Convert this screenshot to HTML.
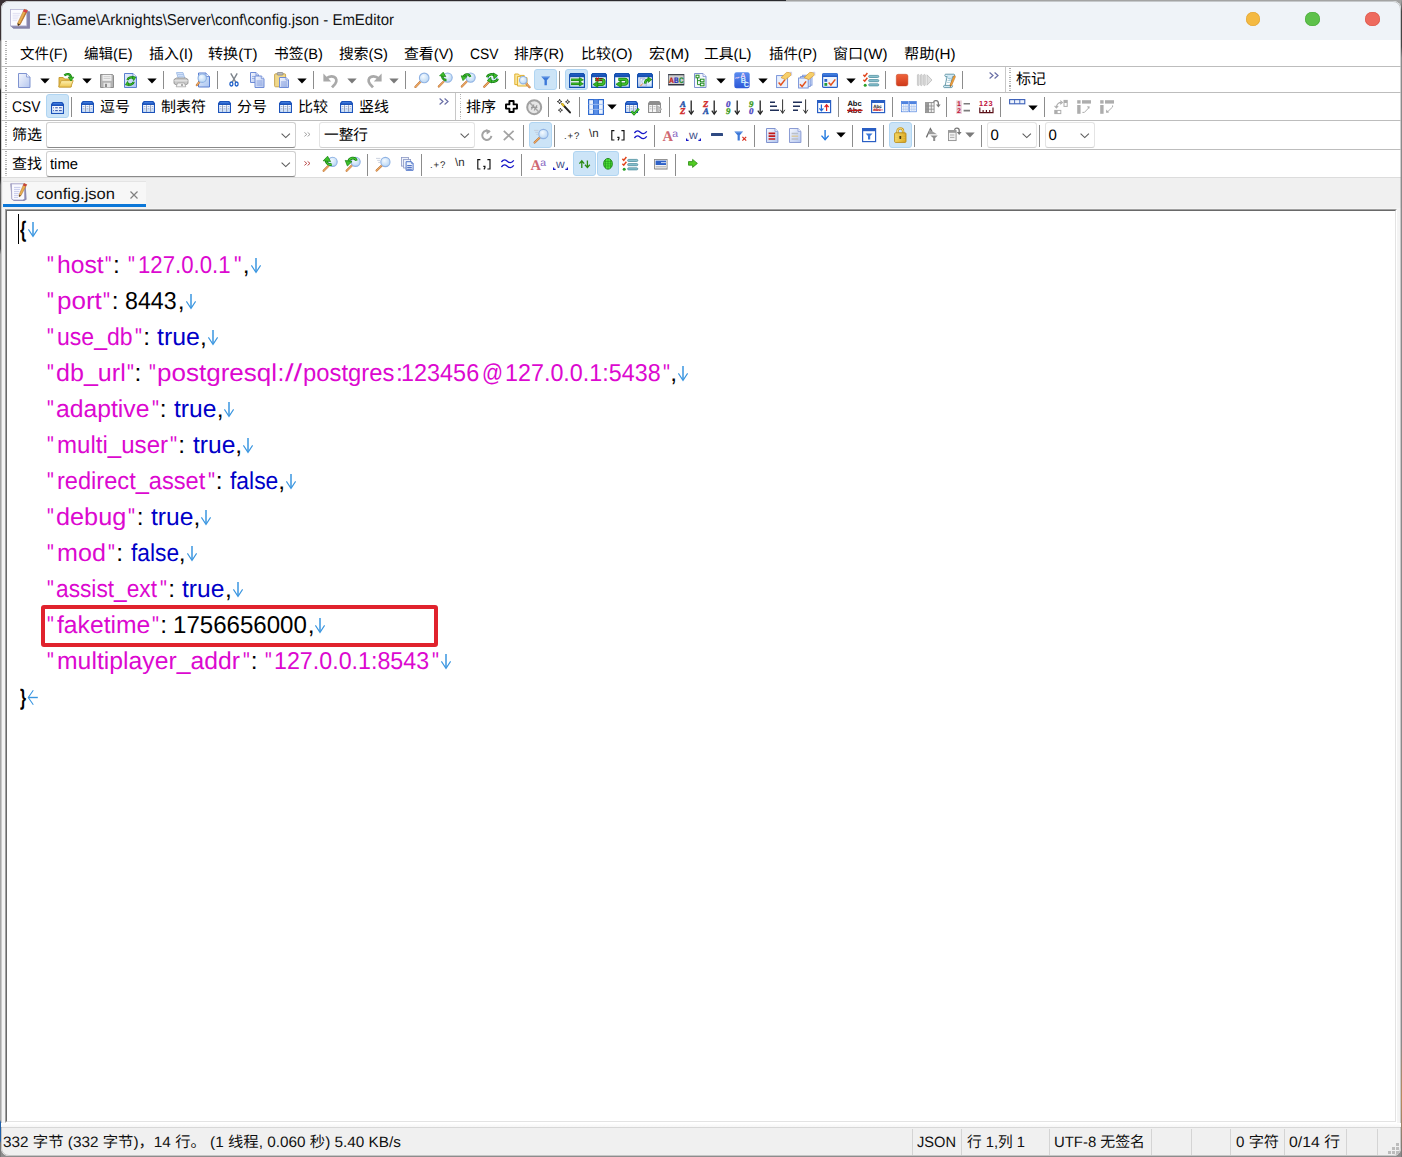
<!DOCTYPE html>
<html lang="zh-CN"><head><meta charset="utf-8"><title>E:\Game\Arknights\Server\conf\config.json - EmEditor</title>
<style>
html,body{margin:0;padding:0;}
body{width:1402px;height:1157px;overflow:hidden;position:relative;background:#8f8f8f;font-family:"Liberation Sans",sans-serif;font-size:15px;color:#000;text-rendering:geometricPrecision;}
.a{position:absolute;}
.t{position:absolute;white-space:nowrap;transform-origin:0 0;line-height:1;display:block;}
svg{position:absolute;overflow:visible;}
.win{position:absolute;left:1px;top:1px;width:1400px;height:1155px;border-radius:8px;background:#fff;overflow:hidden;}
.hl{position:absolute;left:0;width:1402px;height:1px;background:#bdbdbd;}
.vs{position:absolute;width:1px;height:19px;background:#8e8e8e;}
.hot{position:absolute;background:#cce4f7;border:1px solid #b0d5f2;border-radius:3px;box-sizing:border-box;}
.combo{position:absolute;background:#fff;border:1px solid #d0d0d0;border-bottom-color:#8a8a8a;border-radius:3px;box-sizing:border-box;}
.grip{position:absolute;width:1.4px;margin-left:.3px;background:repeating-linear-gradient(to bottom,#a9a9a9 0,#a9a9a9 1.15px,transparent 1.15px,transparent 2.17px,#cfcfcf 2.17px,#cfcfcf 3.3px,transparent 3.3px,transparent 4.34px);}
.c{display:inline-block;width:1em;text-align:center;font-style:normal;}
svg text{text-rendering:geometricPrecision;}

</style></head>
<body>
<div class="a" style="left:0;top:0;width:1402px;height:1157px;background:#8d8d8d"></div><div class="a" style="left:0;top:0;width:786px;height:12px;background:linear-gradient(to right,#3a3034 0,#2e2a2e 60%,#2a2a2e 100%)"></div><div class="a" style="left:786px;top:0;width:616px;height:12px;background:#a3a3a3"></div><div class="a" style="left:0;top:0;width:1px;height:1157px;background:linear-gradient(to bottom,#3a3034 0,#3a3034 3.4%,#8a8a8a 3.6%,#8a8a8a 7.6%,#2b2b2b 7.8%,#2b2b2b 15.5%,#6a6a6a 16%,#505050 21.5%,#a6a6a6 22%,#a6a6a6 96.8%,#1f5fa8 97%,#1f5fa8 98.6%,#777 98.8%,#777 100%)"></div><div class="a" style="left:1401px;top:0;width:1px;height:1157px;background:linear-gradient(to bottom,#9a9a9a 0,#444 1%,#444 4%,#8a8a8a 5%,#8a8a8a 90%,#b98a5a 95%,#777 100%)"></div><div class="win"><div class="a" style="left:0;top:0;width:1400px;height:39px;background:#eff3f8"></div><div class="a" style="left:0;top:177px;width:1400px;height:33px;background:#f0f0f0"></div><div class="a" style="left:0;top:176px;width:1400px;height:1px;background:#dcdcdc"></div><div class="a" style="left:0;top:207px;width:1400px;height:920px;background:#f4f4f4"></div><div class="a" style="left:0;top:1126px;width:1400px;height:30px;background:#f0f0f0"></div><div class="a" style="left:0;top:1126px;width:1400px;height:1px;background:#d7d7d7"></div></div><div class="a" style="left:1px;top:1px;width:1400px;height:1155px;border-radius:8px;box-sizing:border-box;border:1px solid rgba(120,120,120,.35);"></div><div class="hl" style="top:66px;left:1px;width:1400px"></div><div class="hl" style="top:92px;left:1px;width:1400px"></div><div class="hl" style="top:120px;left:1px;width:1400px"></div><div class="hl" style="top:149px;left:1px;width:1400px"></div><div class="grip" style="left:5px;top:41px;height:24px"></div><div class="grip" style="left:5px;top:68px;height:23px"></div><div class="grip" style="left:5px;top:94px;height:25px"></div><div class="grip" style="left:5px;top:122px;height:26px"></div><div class="grip" style="left:5px;top:151px;height:25px"></div><div class="grip" style="left:459.4px;top:94px;height:25px"></div><div class="grip" style="left:1009.2px;top:68px;height:23px"></div><div class="a" style="left:455px;top:93px;width:1px;height:27px;background:#c8c8c8"></div><div class="a" style="left:1005px;top:67px;width:1px;height:25px;background:#c8c8c8"></div><span class="t" style="left:36.6px;top:13.2px;font-size:15.7px;color:#111;transform:scaleX(0.9544);">E:\Game\Arknights\Server\conf\config.json - EmEditor</span><div class="a" style="left:1245.9px;top:11.9px;width:14.6px;height:14.6px;border-radius:50%;background:#f4b942;box-shadow:inset 0 0 0 0.6px #e0a535"></div><div class="a" style="left:1305.1px;top:11.9px;width:14.6px;height:14.6px;border-radius:50%;background:#5ec14b;box-shadow:inset 0 0 0 0.6px #4aa93a"></div><div class="a" style="left:1365.2px;top:11.9px;width:14.6px;height:14.6px;border-radius:50%;background:#ee6a5e;box-shadow:inset 0 0 0 0.6px #d9574b"></div><span class="t" style="left:20px;top:46.9px;font-size:15px;color:#000;transform:scaleX(0.9663);"><i class="c">文</i><i class="c">件</i>(F)</span><span class="t" style="left:84px;top:46.9px;font-size:15px;color:#000;transform:scaleX(0.9700);"><i class="c">编</i><i class="c">辑</i>(E)</span><span class="t" style="left:148.5px;top:46.9px;font-size:15px;color:#000;transform:scaleX(0.9961);"><i class="c">插</i><i class="c">入</i>(I)</span><span class="t" style="left:208px;top:46.9px;font-size:15px;color:#000;transform:scaleX(1.0070);"><i class="c">转</i><i class="c">换</i>(T)</span><span class="t" style="left:273.5px;top:46.9px;font-size:15px;color:#000;transform:scaleX(0.9800);"><i class="c">书</i><i class="c">签</i>(B)</span><span class="t" style="left:338.5px;top:46.9px;font-size:15px;color:#000;transform:scaleX(0.9800);"><i class="c">搜</i><i class="c">索</i>(S)</span><span class="t" style="left:403.5px;top:46.9px;font-size:15px;color:#000;transform:scaleX(0.9900);"><i class="c">查</i><i class="c">看</i>(V)</span><span class="t" style="left:470px;top:46.9px;font-size:15px;color:#000;transform:scaleX(0.9240);">CSV</span><span class="t" style="left:514px;top:46.9px;font-size:15px;color:#000;transform:scaleX(0.9837);"><i class="c">排</i><i class="c">序</i>(R)</span><span class="t" style="left:581px;top:46.9px;font-size:15px;color:#000;transform:scaleX(0.9967);"><i class="c">比</i><i class="c">较</i>(O)</span><span class="t" style="left:648.5px;top:46.9px;font-size:15px;color:#000;transform:scaleX(1.0800);"><i class="c">宏</i>(M)</span><span class="t" style="left:704px;top:46.9px;font-size:15px;color:#000;transform:scaleX(0.9825);"><i class="c">工</i><i class="c">具</i>(L)</span><span class="t" style="left:768.5px;top:46.9px;font-size:15px;color:#000;transform:scaleX(0.9600);"><i class="c">插</i><i class="c">件</i>(P)</span><span class="t" style="left:833px;top:46.9px;font-size:15px;color:#000;transform:scaleX(1.0063);"><i class="c">窗</i><i class="c">口</i>(W)</span><span class="t" style="left:904px;top:46.9px;font-size:15px;color:#000;transform:scaleX(1.0132);"><i class="c">帮</i><i class="c">助</i>(H)</span><span class="t" style="left:1016px;top:72.4px;font-size:15px;color:#000;"><i class="c">标</i><i class="c">记</i></span><span class="t" style="left:12.4px;top:99.5px;font-size:15.5px;color:#000;transform:scaleX(0.8910);">CSV</span><span class="t" style="left:100px;top:99.9px;font-size:15px;color:#000;"><i class="c">逗</i><i class="c">号</i></span><span class="t" style="left:161px;top:99.9px;font-size:15px;color:#000;"><i class="c">制</i><i class="c">表</i><i class="c">符</i></span><span class="t" style="left:237px;top:99.9px;font-size:15px;color:#000;"><i class="c">分</i><i class="c">号</i></span><span class="t" style="left:298px;top:99.9px;font-size:15px;color:#000;"><i class="c">比</i><i class="c">较</i></span><span class="t" style="left:359px;top:99.9px;font-size:15px;color:#000;"><i class="c">竖</i><i class="c">线</i></span><span class="t" style="left:466px;top:99.9px;font-size:15px;color:#000;"><i class="c">排</i><i class="c">序</i></span><span class="t" style="left:12px;top:127.9px;font-size:15px;color:#000;"><i class="c">筛</i><i class="c">选</i></span><span class="t" style="left:12px;top:156.9px;font-size:15px;color:#000;"><i class="c">查</i><i class="c">找</i></span><div class="combo" style="left:46px;top:122px;width:250px;height:26px"></div><div class="combo" style="left:46px;top:151px;width:250px;height:26px"></div><div class="combo" style="left:319px;top:122px;width:156px;height:26px;border-color:#e4e4e4;border-bottom-color:#d0d0d0"></div><div class="combo" style="left:987px;top:122px;width:50px;height:26px;border-color:#e4e4e4;border-bottom-color:#d0d0d0"></div><div class="combo" style="left:1045px;top:122px;width:50px;height:26px;border-color:#e4e4e4;border-bottom-color:#d0d0d0"></div><span class="t" style="left:324px;top:127.9px;font-size:15px;color:#000;transform:scaleX(0.9778);"><i class="c">一</i><i class="c">整</i><i class="c">行</i></span><span class="t" style="left:50px;top:156.9px;font-size:15px;color:#000;transform:scaleX(0.9879);">time</span><span class="t" style="left:990.5px;top:127.9px;font-size:15px;color:#000;">0</span><span class="t" style="left:1048.5px;top:127.9px;font-size:15px;color:#000;">0</span><div class="a" style="left:3px;top:181px;width:143px;height:26px;background:#f7f7f7;border-top:1px solid #e4e4e4;box-sizing:border-box"></div><div class="a" style="left:3px;top:204px;width:143px;height:3px;background:#0b77d8"></div><span class="t" style="left:35.8px;top:186.9px;font-size:15.5px;color:#111;transform:scaleX(1.0660);">config.json</span><div class="a" style="left:5px;top:209px;width:1392px;height:914px;background:#fff;box-sizing:border-box;border-top:1px solid #a0a0a0;border-left:1px solid #a0a0a0;border-right:1px solid #fff;border-bottom:1px solid #fff"></div><div class="a" style="left:6px;top:210px;width:1390px;height:912px;background:#fff;box-sizing:border-box;border-top:1px solid #696969;border-left:1px solid #696969;border-right:1px solid #e3e3e3;border-bottom:1px solid #e3e3e3"></div><div class="a" style="left:1px;top:1123px;width:1400px;height:4px;background:linear-gradient(to bottom,#fff,#f6f6f6)"></div><span class="t" style="left:3.1px;top:1135.4px;font-size:15px;color:#111;transform:scaleX(1.0222);">332 <i class="c">字</i><i class="c">节</i> (332 <i class="c">字</i><i class="c">节</i>)<i class="c">，</i>14 <i class="c">行</i><i class="c">。</i> (1 <i class="c">线</i><i class="c">程</i>, 0.060 <i class="c">秒</i>) 5.40 KB/s</span><div class="a" style="left:912px;top:1129px;width:1px;height:26px;background:#d4d4d4"></div><div class="a" style="left:961px;top:1129px;width:1px;height:26px;background:#d4d4d4"></div><div class="a" style="left:1049px;top:1129px;width:1px;height:26px;background:#d4d4d4"></div><div class="a" style="left:1151px;top:1129px;width:1px;height:26px;background:#d4d4d4"></div><div class="a" style="left:1191px;top:1129px;width:1px;height:26px;background:#d4d4d4"></div><div class="a" style="left:1230px;top:1129px;width:1px;height:26px;background:#d4d4d4"></div><div class="a" style="left:1284px;top:1129px;width:1px;height:26px;background:#d4d4d4"></div><div class="a" style="left:1346px;top:1129px;width:1px;height:26px;background:#d4d4d4"></div><div class="a" style="left:1377px;top:1129px;width:1px;height:26px;background:#d4d4d4"></div><span class="t" style="left:917px;top:1135.4px;font-size:15px;color:#111;transform:scaleX(0.9746);">JSON</span><span class="t" style="left:966.5px;top:1135.4px;font-size:15px;color:#111;transform:scaleX(0.9797);"><i class="c">行</i> 1,<i class="c">列</i> 1</span><span class="t" style="left:1054px;top:1135.4px;font-size:15px;color:#111;transform:scaleX(0.9927);">UTF-8 <i class="c">无</i><i class="c">签</i><i class="c">名</i></span><span class="t" style="left:1236px;top:1135.4px;font-size:15px;color:#111;transform:scaleX(1.0114);">0 <i class="c">字</i><i class="c">符</i></span><span class="t" style="left:1289px;top:1135.4px;font-size:15px;color:#111;transform:scaleX(1.0543);">0/14 <i class="c">行</i></span><div class="a" style="left:1388px;top:1151px;width:3px;height:3px;background:#bcbcbc"></div><div class="a" style="left:1392px;top:1151px;width:3px;height:3px;background:#bcbcbc"></div><div class="a" style="left:1396px;top:1151px;width:3px;height:3px;background:#bcbcbc"></div><div class="a" style="left:1392px;top:1147px;width:3px;height:3px;background:#bcbcbc"></div><div class="a" style="left:1396px;top:1147px;width:3px;height:3px;background:#bcbcbc"></div><div class="a" style="left:1396px;top:1143px;width:3px;height:3px;background:#bcbcbc"></div><svg width="0" height="0" style="left:0;top:0"><defs><linearGradient id="gPg" x1="0" y1="0" x2="1" y2="1"><stop offset="0" stop-color="#f6f8fe"/><stop offset="1" stop-color="#b4c6ee"/></linearGradient><linearGradient id="gPb" x1="0" y1="0" x2="1" y2="1"><stop offset="0" stop-color="#e8f0fd"/><stop offset="1" stop-color="#a9c4f0"/></linearGradient><linearGradient id="gFo" x1="0" y1="0" x2="0" y2="1"><stop offset="0" stop-color="#fdf0b0"/><stop offset="1" stop-color="#eec650"/></linearGradient><radialGradient id="gGl" cx=".4" cy=".35" r=".7"><stop offset="0" stop-color="#f4faff"/><stop offset="1" stop-color="#b5d4f3"/></radialGradient><linearGradient id="gHd" x1="0" y1="0" x2="1" y2="1"><stop offset="0" stop-color="#f0b070"/><stop offset="1" stop-color="#b86a2c"/></linearGradient><linearGradient id="gRec" x1="0" y1="0" x2="0" y2="1"><stop offset="0" stop-color="#f0633a"/><stop offset="1" stop-color="#cf3a1c"/></linearGradient><linearGradient id="gBl" x1="0" y1="0" x2="0" y2="1"><stop offset="0" stop-color="#5b8cf0"/><stop offset="1" stop-color="#2c58d8"/></linearGradient><linearGradient id="gLk" x1="0" y1="0" x2="1" y2="0"><stop offset="0" stop-color="#f7dc6a"/><stop offset="1" stop-color="#d9a520"/></linearGradient><linearGradient id="gTd" x1="0" y1="0" x2="0" y2="1"><stop offset="0" stop-color="#2f6ad2"/><stop offset="1" stop-color="#0f47a8"/></linearGradient><linearGradient id="gWb" x1="0" y1="0" x2="0" y2="1"><stop offset="0" stop-color="#ffffff"/><stop offset=".6" stop-color="#f4f9ff"/><stop offset="1" stop-color="#b5d5f8"/></linearGradient><linearGradient id="gTbody" x1="0" y1="0" x2="0" y2="1"><stop offset="0" stop-color="#ffffff"/><stop offset=".55" stop-color="#f2f7fe"/><stop offset="1" stop-color="#bcd6f8"/></linearGradient><linearGradient id="gTb" x1="0" y1="0" x2="0" y2="1"><stop offset="0" stop-color="#4d8be8"/><stop offset="1" stop-color="#1f55c0"/></linearGradient></defs></svg><svg style="left:18px;top:73px" width="16" height="16" viewBox="0 0 16 16"><path d="M0.5 0.5H8.5L12 4V14.5H0.5Z" fill="url(#gPg)" stroke="#7f93d0" stroke-width="1"/><path d="M8.5 0.5V4H12" fill="#f6f8fe" stroke="#7f93d0" stroke-width="0.8"/></svg><svg style="left:39.6px;top:77.6px" width="10" height="6" viewBox="0 0 10 6"><path d="M0.3 0.5H9.7L5 5.6Z" fill="#000"/></svg><svg style="left:57.5px;top:72px" width="16" height="16" viewBox="0 0 16 16"><path d="M1 5.5H5.2L6.6 7H13.2V15H1Z" fill="#e7c04e" stroke="#c2952a" stroke-width=".9"/><path d="M0.7 15L3.2 8.6H15.2L12.8 15Z" fill="url(#gFo)" stroke="#c9a038" stroke-width=".9"/><path d="M6.5 3.6C8.5 1.2 12.6 1.6 13 5.6" fill="none" stroke="#14800f" stroke-width="2.3"/><path d="M6.5 3.6C8.5 1.2 12.6 1.6 13 5.6" fill="none" stroke="#4ccc38" stroke-width="0.8"/><path d="M10.2 5.2H15.8L13 9Z" fill="#3dbf2a" stroke="#14800f" stroke-width=".7" stroke-linejoin="round"/></svg><svg style="left:81.6px;top:77.6px" width="10" height="6" viewBox="0 0 10 6"><path d="M0.3 0.5H9.7L5 5.6Z" fill="#000"/></svg><svg style="left:100px;top:74px" width="14" height="14" viewBox="0 0 14 14"><path d="M0.5 0.5H12.5L13.5 1.5V13.5H0.5Z" fill="#b4b4b4" stroke="#8d8d8d"/><rect x="2.5" y="0.8" width="9" height="6" fill="#f1f1f1"/><path d="M3.5 2.7H10.5M3.5 4.6H10.5" stroke="#c4c4c4" stroke-width=".8"/><rect x="3.5" y="8.8" width="7" height="4.7" fill="#e6e6e6"/><rect x="5" y="9.8" width="2" height="3.2" fill="#8c8c8c"/></svg><svg style="left:124px;top:73px" width="16" height="16" viewBox="0 0 16 16"><path d="M0.5 0.5H9L12.5 4V14.5H0.5Z" fill="url(#gPb)" stroke="#5a7fd0" stroke-width="1"/><path d="M9 0.5V4H12.5" fill="#f6f8fe" stroke="#5a7fd0" stroke-width="0.8"/><path d="M3.6 7.2C4 4.6 7.5 3.6 9.6 5.4" fill="none" stroke="#14800f" stroke-width="2.3"/><path d="M3.6 7.2C4 4.6 7.5 3.6 9.6 5.4" fill="none" stroke="#4ccc38" stroke-width="0.8"/><path d="M8 3.2L11.8 4.2L9.6 7.6Z" fill="#3dbf2a" stroke="#14800f" stroke-width=".7" stroke-linejoin="round"/><path d="M9.6 8.8C9.2 11.4 5.7 12.4 3.6 10.6" fill="none" stroke="#14800f" stroke-width="2.3"/><path d="M9.6 8.8C9.2 11.4 5.7 12.4 3.6 10.6" fill="none" stroke="#4ccc38" stroke-width="0.8"/><path d="M5.2 12.8L1.4 11.8L3.6 8.4Z" fill="#3dbf2a" stroke="#14800f" stroke-width=".7" stroke-linejoin="round"/></svg><svg style="left:146.8px;top:77.6px" width="10" height="6" viewBox="0 0 10 6"><path d="M0.3 0.5H9.7L5 5.6Z" fill="#000"/></svg><div class="a" style="left:163px;top:71px;width:1px;height:18px;background:#8c8c8c"></div><svg style="left:172.5px;top:72px" width="16" height="16" viewBox="0 0 16 16"><path d="M3.5 0.6H10L12 7H5.5Z" fill="#d6e6fb" stroke="#8fb0e0" stroke-width=".8"/><path d="M5 2.5H10M5.6 4.3H10.6" stroke="#9db9e6" stroke-width=".7"/><path d="M1 7.5L3.5 6H12.5L15 7.5V11.5L12.5 13H3.5L1 11.5Z" fill="#c9c9c9" stroke="#8a8a8a" stroke-width=".8"/><path d="M1.2 8.8H14.8" stroke="#f3f3f3" stroke-width=".8"/><path d="M4.5 11H11.5L12.8 14.8H3.2Z" fill="#f4f4f4" stroke="#9a9a9a" stroke-width=".7"/><circle cx="9" cy="13" r=".8" fill="#555"/></svg><svg style="left:196px;top:72px" width="16" height="16" viewBox="0 0 16 16"><path d="M2.5 1H10L13.5 4.5V15H2.5Z" fill="url(#gPb)" stroke="#5a7fd0" stroke-width="1"/><path d="M10 1V4.5H13.5" fill="#f6f8fe" stroke="#5a7fd0" stroke-width="0.8"/><path d="M3.63463 9.52549L0.8 13.2" stroke="#b5682a" stroke-width="2.1" stroke-linecap="round"/><path d="M3.63463 9.52549L0.8 13.2" stroke="#f3b06a" stroke-width="1.1" stroke-linecap="round"/><circle cx="6.2" cy="6.2" r="4.2" fill="url(#gGl)" stroke="#8fb2e3" stroke-width="1.1"/></svg><div class="a" style="left:217px;top:71px;width:1px;height:18px;background:#8c8c8c"></div><svg style="left:229.4px;top:73px" width="10" height="14" viewBox="0 0 10 14"><path d="M1.8 0.4L6.9 9.4M8.2 0.4L3.1 9.4" stroke="#7d848c" stroke-width="1.4" fill="none"/><ellipse cx="2.4" cy="11" rx="1.5" ry="2" fill="none" stroke="#1e5fc8" stroke-width="1.3"/><ellipse cx="7.6" cy="11" rx="1.5" ry="2" fill="none" stroke="#1e5fc8" stroke-width="1.3"/></svg><svg style="left:250px;top:72px" width="16" height="16" viewBox="0 0 16 16"><path d="M0.5 0.5H6L8.5 3V10.5H0.5Z" fill="url(#gPg)" stroke="#6f8cd6" stroke-width="1"/><path d="M6 0.5V3H8.5" fill="#f6f8fe" stroke="#6f8cd6" stroke-width="0.8"/><path d="M2 4.5H5M2 6.5H6" stroke="#8aa5e0" stroke-width=".8"/><path d="M5 4H11.3L14 6.7V15.5H5Z" fill="url(#gPg)" stroke="#6f8cd6" stroke-width="1"/><path d="M11.3 4V6.7H14" fill="#f6f8fe" stroke="#6f8cd6" stroke-width="0.8"/><path d="M6.5 9H12.5M6.5 11H12.5M6.5 13H12.5" stroke="#7f9ade" stroke-width=".9"/></svg><svg style="left:273.5px;top:72px" width="16" height="16" viewBox="0 0 16 16"><rect x="0.6" y="1.8" width="11" height="13" rx="1" fill="#f0d88a" stroke="#c4a04a" stroke-width=".9"/><rect x="3.2" y="0.5" width="5.8" height="2.6" rx=".8" fill="#b9b9b9" stroke="#808080" stroke-width=".7"/><path d="M5.5 5.5H12L14.5 8V15.5H5.5Z" fill="url(#gPg)" stroke="#6f8cd6" stroke-width="1"/><path d="M12 5.5V8H14.5" fill="#f6f8fe" stroke="#6f8cd6" stroke-width="0.8"/><path d="M7 10H13M7 12H13M7 14H13" stroke="#7f9ade" stroke-width=".9"/></svg><svg style="left:296.8px;top:77.6px" width="10" height="6" viewBox="0 0 10 6"><path d="M0.3 0.5H9.7L5 5.6Z" fill="#000"/></svg><div class="a" style="left:313px;top:71px;width:1px;height:18px;background:#8c8c8c"></div><svg style="left:322.5px;top:72.5px" width="16" height="16" viewBox="0 0 16 16"><path d="M3 5.8C8.6 0.6 16.4 4.6 12.2 10.8L9 14.4" fill="none" stroke="#a9a9a9" stroke-width="2.7" stroke-linejoin="round"/><path d="M0.4 0.4V8.6H8.2Z" fill="#a9a9a9"/></svg><svg style="left:346.6px;top:77.6px" width="10" height="6" viewBox="0 0 10 6"><path d="M0.3 0.5H9.7L5 5.6Z" fill="#7a7a7a"/></svg><svg style="left:365.5px;top:72.5px" width="16" height="16" viewBox="0 0 16 16"><g transform="translate(16 0) scale(-1 1)"><path d="M3 5.8C8.6 0.6 16.4 4.6 12.2 10.8L9 14.4" fill="none" stroke="#a9a9a9" stroke-width="2.7" stroke-linejoin="round"/><path d="M0.4 0.4V8.6H8.2Z" fill="#a9a9a9"/></g></svg><svg style="left:388.6px;top:77.6px" width="10" height="6" viewBox="0 0 10 6"><path d="M0.3 0.5H9.7L5 5.6Z" fill="#7a7a7a"/></svg><div class="a" style="left:405px;top:71px;width:1px;height:18px;background:#8c8c8c"></div><svg style="left:413.5px;top:72px" width="16" height="16" viewBox="0 0 16 16"><path d="M6.86324 9.35051L1.4 15" stroke="#b5682a" stroke-width="2.1" stroke-linecap="round"/><path d="M6.86324 9.35051L1.4 15" stroke="#f3b06a" stroke-width="1.1" stroke-linecap="round"/><circle cx="10.2" cy="5.9" r="4.8" fill="url(#gGl)" stroke="#8fb2e3" stroke-width="1.1"/></svg><svg style="left:436.5px;top:72px" width="16" height="16" viewBox="0 0 16 16"><path d="M7.38406 8.88903L1.8 14.6" stroke="#b5682a" stroke-width="2.1" stroke-linecap="round"/><path d="M7.38406 8.88903L1.8 14.6" stroke="#f3b06a" stroke-width="1.1" stroke-linecap="round"/><circle cx="10.6" cy="5.6" r="4.6" fill="url(#gGl)" stroke="#8fb2e3" stroke-width="1.1"/><path d="M9.4 8C6 8.2 4.6 5.4 5.6 3" fill="none" stroke="#14800f" stroke-width="2.3"/><path d="M9.4 8C6 8.2 4.6 5.4 5.6 3" fill="none" stroke="#4ccc38" stroke-width="0.8"/><path d="M2.6 3.8L6.2 0.2L8.8 4.6Z" fill="#3dbf2a" stroke="#14800f" stroke-width=".7" stroke-linejoin="round"/></svg><svg style="left:460px;top:72px" width="16" height="16" viewBox="0 0 16 16"><path d="M7.38406 8.88903L1.8 14.6" stroke="#b5682a" stroke-width="2.1" stroke-linecap="round"/><path d="M7.38406 8.88903L1.8 14.6" stroke="#f3b06a" stroke-width="1.1" stroke-linecap="round"/><circle cx="10.6" cy="5.6" r="4.6" fill="url(#gGl)" stroke="#8fb2e3" stroke-width="1.1"/><path d="M3.6 5.2C4.6 1.6 9.4 1.4 10.2 5" fill="none" stroke="#14800f" stroke-width="2.3"/><path d="M3.6 5.2C4.6 1.6 9.4 1.4 10.2 5" fill="none" stroke="#4ccc38" stroke-width="0.8"/><path d="M1.2 3.8L7 4.6L3 8.6Z" fill="#3dbf2a" stroke="#14800f" stroke-width=".7" stroke-linejoin="round"/></svg><svg style="left:483px;top:72px" width="16" height="16" viewBox="0 0 16 16"><path d="M6.56191 9.18276L1.2 14.8" stroke="#b5682a" stroke-width="2.1" stroke-linecap="round"/><path d="M6.56191 9.18276L1.2 14.8" stroke="#f3b06a" stroke-width="1.1" stroke-linecap="round"/><circle cx="9.6" cy="6" r="4.4" fill="url(#gGl)" stroke="#8fb2e3" stroke-width="1.1"/><path d="M4.2 5.2C5 2 9.6 1.4 11.6 3.8" fill="none" stroke="#14800f" stroke-width="2.5"/><path d="M4.2 5.2C5 2 9.6 1.4 11.6 3.8" fill="none" stroke="#4ccc38" stroke-width="0.9"/><path d="M10.2 1L14.6 3.4L11 6.8Z" fill="#3dbf2a" stroke="#14800f" stroke-width=".7" stroke-linejoin="round"/><path d="M14.6 6.8C13.8 10 9.2 10.6 7.2 8.2" fill="none" stroke="#14800f" stroke-width="2.5"/><path d="M14.6 6.8C13.8 10 9.2 10.6 7.2 8.2" fill="none" stroke="#4ccc38" stroke-width="0.9"/><path d="M8.6 11L4.2 8.6L7.8 5.2Z" fill="#3dbf2a" stroke="#14800f" stroke-width=".7" stroke-linejoin="round"/></svg><div class="a" style="left:505px;top:71px;width:1px;height:18px;background:#8c8c8c"></div><svg style="left:513.5px;top:72px" width="16" height="16" viewBox="0 0 16 16"><path d="M0.8 2H4.4L5.6 3.4H10.2V12.6H0.8Z" fill="#fbeaa4" stroke="#e0b030" stroke-width="1"/><path d="M3.4 4.4H6.8L7.8 5.6H13V14H3.4Z" fill="#fdf1c0" stroke="#e0b030" stroke-width="1"/><path d="M11.6966 10.9307L15.6 15.2" stroke="#b5682a" stroke-width="2.1" stroke-linecap="round"/><path d="M11.6966 10.9307L15.6 15.2" stroke="#f3b06a" stroke-width="1.1" stroke-linecap="round"/><circle cx="9.2" cy="8.2" r="3.7" fill="url(#gGl)" stroke="#8fb2e3" stroke-width="1.1"/></svg><div class="hot" style="left:534px;top:69px;width:23px;height:21px"></div><svg style="left:541px;top:75.8px" width="9.4" height="9.4" viewBox="0 0 9.4 9.4"><path d="M0.2 0.4H9.2L5.9 4.2V9.2H3.5V4.2Z" fill="#3c78d8"/><path d="M1.4 1H8" stroke="#8fb8f2" stroke-width=".7"/></svg><div class="a" style="left:559px;top:71px;width:1px;height:18px;background:#8c8c8c"></div><div class="hot" style="left:565px;top:69px;width:23px;height:21px"></div><svg style="left:568.5px;top:72.5px" width="16" height="15" viewBox="0 0 16 15"><path d="M0.6 14.4V2.2L1.8 0.6H14.2L15.4 2.2V14.4Z" fill="url(#gWb)" stroke="#1450b0" stroke-width="1.2" stroke-linejoin="round"/><path d="M0.6 3.6V2.2L1.8 0.6H14.2L15.4 2.2V3.6Z" fill="url(#gTd)" stroke="#1450b0" stroke-width="1.2" stroke-linejoin="round"/><path d="M2 6.8H11" fill="none" stroke="#14800f" stroke-width="2.6" stroke-linejoin="round"/><path d="M2 6.8H11" fill="none" stroke="#43c02c" stroke-width="1.1" stroke-linejoin="round"/><path d="M2 10.8H11" fill="none" stroke="#14800f" stroke-width="2.6" stroke-linejoin="round"/><path d="M2 10.8H11" fill="none" stroke="#43c02c" stroke-width="1.1" stroke-linejoin="round"/><path d="M10.4 4.6L14.4 6.8L10.4 9Z" fill="#35b322" stroke="#14800f" stroke-width=".7" stroke-linejoin="round"/><path d="M10.4 8.6L14.4 10.8L10.4 13Z" fill="#35b322" stroke="#14800f" stroke-width=".7" stroke-linejoin="round"/></svg><svg style="left:591px;top:72.5px" width="16" height="15" viewBox="0 0 16 15"><path d="M0.6 14.4V2.2L1.8 0.6H14.2L15.4 2.2V14.4Z" fill="url(#gWb)" stroke="#1450b0" stroke-width="1.2" stroke-linejoin="round"/><path d="M0.6 3.6V2.2L1.8 0.6H14.2L15.4 2.2V3.6Z" fill="url(#gTd)" stroke="#1450b0" stroke-width="1.2" stroke-linejoin="round"/><path d="M4 6.6H10.6C13.8 6.6 13.8 11.4 10.6 11.4H6" fill="none" stroke="#14800f" stroke-width="3.2" stroke-linejoin="round"/><path d="M4 6.6H10.6C13.8 6.6 13.8 11.4 10.6 11.4H6" fill="none" stroke="#43c02c" stroke-width="1.7" stroke-linejoin="round"/><path d="M6.8 8.2L2 11.4L6.8 14.4Z" fill="#35b322" stroke="#14800f" stroke-width=".7" stroke-linejoin="round"/><path d="M5 4.6L7.8 8.2M7.8 4.6L5 8.2" stroke="#c01414" stroke-width="1.3"/><path d="M8.6 5.6H11.4M8.6 7.4H11.4" stroke="#7a1010" stroke-width="1"/></svg><svg style="left:614px;top:72.5px" width="16" height="15" viewBox="0 0 16 15"><path d="M0.6 14.4V2.2L1.8 0.6H14.2L15.4 2.2V14.4Z" fill="url(#gWb)" stroke="#1450b0" stroke-width="1.2" stroke-linejoin="round"/><path d="M0.6 3.6V2.2L1.8 0.6H14.2L15.4 2.2V3.6Z" fill="url(#gTd)" stroke="#1450b0" stroke-width="1.2" stroke-linejoin="round"/><path d="M4.4 6.4H10.6C13.8 6.4 13.8 11.2 10.6 11.2H6.4" fill="none" stroke="#14800f" stroke-width="3.2" stroke-linejoin="round"/><path d="M4.4 6.4H10.6C13.8 6.4 13.8 11.2 10.6 11.2H6.4" fill="none" stroke="#43c02c" stroke-width="1.7" stroke-linejoin="round"/><path d="M7.2 7.8L2 11.2L7.2 14.4Z" fill="#35b322" stroke="#14800f" stroke-width=".7" stroke-linejoin="round"/></svg><svg style="left:637px;top:72.5px" width="16" height="15" viewBox="0 0 16 15"><path d="M0.6 14.4V2.2L1.8 0.6H14.2L15.4 2.2V14.4Z" fill="url(#gWb)" stroke="#1450b0" stroke-width="1.2" stroke-linejoin="round"/><path d="M0.6 3.6V2.2L1.8 0.6H14.2L15.4 2.2V3.6Z" fill="url(#gTd)" stroke="#1450b0" stroke-width="1.2" stroke-linejoin="round"/><path d="M3 5.2H7.6L9.2 6.8V13H3Z" fill="#f4f6fc" stroke="#8a9ad0" stroke-width=".7"/><circle cx="7.4" cy="8.6" r="2.6" fill="#e6f0fc" stroke="#9ab0d8" stroke-width=".8"/><path d="M5.6 10.6L3.4 13.2" stroke="#d89a6a" stroke-width="1.1"/><path d="M8.2 10.4C8.2 7.4 10.2 6.4 12.2 6.6" fill="none" stroke="#14800f" stroke-width="2.6" stroke-linejoin="round"/><path d="M8.2 10.4C8.2 7.4 10.2 6.4 12.2 6.6" fill="none" stroke="#43c02c" stroke-width="1.1" stroke-linejoin="round"/><path d="M11 4L14.8 6.6L11.2 9.4Z" fill="#35b322" stroke="#14800f" stroke-width=".7" stroke-linejoin="round"/></svg><div class="a" style="left:659px;top:71px;width:1px;height:18px;background:#8c8c8c"></div><svg style="left:667.8px;top:74px" width="16.4" height="11.4" viewBox="0 0 16.4 11.4"><rect x="0.4" y="0.4" width="15.6" height="10.6" fill="#cfcfcf" stroke="#5a6070" stroke-width=".8"/><path d="M0.4 0.8H16M0.4 10.6H16" stroke="#30343c" stroke-width="1.1"/><text x="0.9" y="8.9" font-family="Liberation Sans,sans-serif" font-weight="bold" font-size="8" fill="#c01818" stroke="#c01818" stroke-width=".25" textLength="4.9" lengthAdjust="spacingAndGlyphs">A</text><text x="6" y="8.9" font-family="Liberation Sans,sans-serif" font-weight="bold" font-size="8" fill="#2030b8" stroke="#2030b8" stroke-width=".25" textLength="4.6" lengthAdjust="spacingAndGlyphs">B</text><text x="10.9" y="8.9" font-family="Liberation Sans,sans-serif" font-weight="bold" font-size="8" fill="#1a8a2a" stroke="#1a8a2a" stroke-width=".25" textLength="4.6" lengthAdjust="spacingAndGlyphs">C</text></svg><svg style="left:694px;top:72.5px" width="13" height="15" viewBox="0 0 13 15"><path d="M0.5 0.5H9L12 3.5V14.5H0.5Z" fill="#f4f7fd" stroke="#7f93d0" stroke-width="1"/><path d="M9 0.5V3.5H12" fill="#f6f8fe" stroke="#7f93d0" stroke-width="0.8"/><rect x="2" y="2.2" width="3" height="2.6" fill="#f4fbf4" stroke="#1f8a1f" stroke-width="1"/><path d="M3.5 4.8V11.6H6.4M3.5 7.6H6.4" fill="none" stroke="#1f8a1f" stroke-width=".9"/><rect x="6.4" y="6.2" width="3.6" height="2.6" fill="#f4fbf4" stroke="#1f8a1f" stroke-width="1"/><rect x="6.4" y="10.2" width="3.6" height="2.6" fill="#f4fbf4" stroke="#1f8a1f" stroke-width="1"/></svg><svg style="left:715.6px;top:77.6px" width="10" height="6" viewBox="0 0 10 6"><path d="M0.3 0.5H9.7L5 5.6Z" fill="#000"/></svg><svg style="left:733.5px;top:71.5px" width="16" height="17" viewBox="0 0 16 17"><rect x="0.3" y="0.3" width="15.4" height="16" rx="2.2" fill="url(#gBl)"/><text x="6.2" y="6.4" font-family="Liberation Sans,sans-serif" font-weight="bold" font-size="7.4" fill="#f4dcf4">A</text><text x="6.8" y="11.4" font-family="Liberation Sans,sans-serif" font-weight="bold" font-size="7.4" fill="#d4f2ff">B</text><text x="9.8" y="15.4" font-family="Liberation Sans,sans-serif" font-weight="bold" font-size="7.4" fill="#d4f2ff">C</text><path d="M1.4 6.6C2.4 4.6 3.4 7.2 5.4 4.8" fill="none" stroke="#e0c8f0" stroke-width="1.1"/></svg><svg style="left:757.6px;top:77.6px" width="10" height="6" viewBox="0 0 10 6"><path d="M0.3 0.5H9.7L5 5.6Z" fill="#000"/></svg><svg style="left:775.5px;top:71.5px" width="16" height="16.5" viewBox="0 0 16 16.5"><rect x="0.6" y="3.6" width="11" height="12" fill="#e9f0fc" stroke="#6f8cd6" stroke-width=".9"/><path d="M2.6 10.6L4.8 13L9 7.6" fill="none" stroke="#e4521e" stroke-width="1.5"/><path d="M5 5.6L10.6 0.4L14.8 0.6L15.2 3L9.6 7.6Z" fill="#f6cf6a" stroke="#d8962a" stroke-width=".7"/><path d="M13.4 0.4L15.6 0.2V3.6" fill="none" stroke="#c9c9e8" stroke-width=".9"/></svg><svg style="left:798px;top:71.5px" width="17" height="16.5" viewBox="0 0 17 16.5"><rect x="4.6" y="3.2" width="9.4" height="10" fill="#dbe6fa" stroke="#6f8cd6" stroke-width=".8"/><rect x="2.6" y="4.6" width="9.6" height="10" fill="#dbe6fa" stroke="#6f8cd6" stroke-width=".8"/><rect x="0.6" y="6" width="9.6" height="10" fill="#e9f0fc" stroke="#6f8cd6" stroke-width=".9"/><path d="M2 12.25L4.09 14.53L8.08 9.4" fill="none" stroke="#e4521e" stroke-width="1.5"/><g transform="translate(1.2 0)"><path d="M5 5.6L10.6 0.4L14.8 0.6L15.2 3L9.6 7.6Z" fill="#f6cf6a" stroke="#d8962a" stroke-width=".7"/><path d="M13.4 0.4L15.6 0.2V3.6" fill="none" stroke="#c9c9e8" stroke-width=".9"/></g></svg><svg style="left:822px;top:72.5px" width="16" height="15" viewBox="0 0 16 15"><rect x="0.6" y="0.6" width="14.8" height="13.8" rx="1" fill="#eef4fd" stroke="#2a62c8" stroke-width="1.2"/><path d="M0.6 1.6Q0.6 0.6 1.6 0.6H14.4Q15.4 0.6 15.4 1.6V4H0.6Z" fill="url(#gTb)"/><rect x="2.4" y="6" width="2.8" height="2.8" fill="#2a62c8"/><rect x="2.4" y="10" width="2.8" height="2.8" fill="#1f9a3a"/><path d="M6.6 9.55L8.91 12.07L13.32 6.4" fill="none" stroke="#e4521e" stroke-width="1.5"/></svg><svg style="left:845.6px;top:77.6px" width="10" height="6" viewBox="0 0 10 6"><path d="M0.3 0.5H9.7L5 5.6Z" fill="#000"/></svg><svg style="left:862.5px;top:72px" width="16" height="16" viewBox="0 0 16 16"><path d="M0.4 2.86L1.764 4.348L4.368 1" fill="none" stroke="#e0451c" stroke-width="1.5"/><path d="M0.4 7.66L1.764 9.148L4.368 5.8" fill="none" stroke="#e0451c" stroke-width="1.5"/><circle cx="2.2" cy="13.2" r="1.5" fill="#2aa02a"/><rect x="5.6" y="3.4" width="10.2" height="2.1" rx="1.05" fill="#8cc3cf" stroke="#3f8496" stroke-width=".7"/><rect x="5.6" y="7.6" width="10.2" height="2.1" rx="1.05" fill="#8cc3cf" stroke="#3f8496" stroke-width=".7"/><rect x="5.6" y="11.8" width="10.2" height="2.1" rx="1.05" fill="#8cc3cf" stroke="#3f8496" stroke-width=".7"/></svg><div class="a" style="left:885px;top:71px;width:1px;height:18px;background:#8c8c8c"></div><svg style="left:896px;top:74px" width="12.2" height="12.2" viewBox="0 0 12.2 12.2"><rect x="0.3" y="0.3" width="11.6" height="11.6" rx="1.8" fill="url(#gRec)" stroke="#c2401f" stroke-width=".5"/></svg><svg style="left:917px;top:74px" width="16" height="12" viewBox="0 0 16 12"><rect x="0.4" y="0.4" width="1.7" height="11.2" rx=".85" fill="#dadada" stroke="#b4b4b4" stroke-width=".6"/><rect x="3.5" y="0.4" width="1.7" height="11.2" rx=".85" fill="#dadada" stroke="#b4b4b4" stroke-width=".6"/><rect x="6.6" y="0.4" width="1.7" height="11.2" rx=".85" fill="#dadada" stroke="#b4b4b4" stroke-width=".6"/><path d="M10 0.8L15 6L10 11.2Z" fill="#e0e0e0" stroke="#b4b4b4" stroke-width=".7"/></svg><svg style="left:943px;top:72.5px" width="16.5" height="15.5" viewBox="0 0 16.5 15.5"><g transform="scale(.8 1)"><path d="M3.4 1.2H13.6C15 1.2 15 3.6 13.6 3.6H12L9.4 12.4H1.6C0.4 12.4 0.4 14.6 1.6 14.6H10.4C12.2 14.6 12 12.4 12 12.4" fill="#cfe9f6" stroke="#4f8a9a" stroke-width=".9"/><path d="M3.4 1.2C1.8 1.2 2 3.6 3.4 3.6H5.2L2.8 12.2" fill="#cfe9f6" stroke="#4f8a9a" stroke-width=".9"/><path d="M6.2 5.4H9.8M5.6 7.4H9.2M5 9.4H8.6" stroke="#7fb0c0" stroke-width=".7"/><path d="M13.8 2.6L15.6 3.6L10.8 12.6L9 13.6L9 11.6Z" fill="#f2a73a" stroke="#b8651a" stroke-width=".6"/><path d="M9 13.6L9.1 12.2L10.2 12.9Z" fill="#333"/></svg><div class="a" style="left:962px;top:71px;width:1px;height:18px;background:#8c8c8c"></div><svg style="left:989px;top:72.3px" width="10" height="7" viewBox="0 0 10 7"><path d="M0.6 0.5L4 3.5L0.6 6.5M5.6 0.5L9 3.5L5.6 6.5" fill="none" stroke="#6a6fa6" stroke-width="1.2"/></svg><div class="hot" style="left:45.5px;top:93.8px;width:23.5px;height:24.5px"></div><svg style="left:51px;top:102px" width="13" height="12" viewBox="0 0 13 12"><path d="M0.55 11.45V2.6L2.2 0.55H10.8L12.45 2.6V11.45Z" fill="url(#gTbody)" stroke="#1b52ba" stroke-width="1.1" stroke-linejoin="round"/><path d="M0.55 3.4V2.6L2.2 0.55H10.8L12.45 2.6V3.4Z" fill="url(#gTb)" stroke="#1b52ba" stroke-width="1.1" stroke-linejoin="round"/><path d="M2.2 5.8H3M4.2 5.8H6.8M8 5.8H10.8M2.2 8.6H3M4.2 8.6H6.8M8 8.6H10.8" stroke="#3050a8" stroke-width="1"/></svg><div class="a" style="left:71px;top:97.2px;width:1px;height:19.6px;background:#8c8c8c"></div><svg style="left:81px;top:101px" width="13" height="12" viewBox="0 0 13 12"><path d="M0.55 11.45V2.6L2.2 0.55H10.8L12.45 2.6V11.45Z" fill="url(#gTbody)" stroke="#1b52ba" stroke-width="1.1" stroke-linejoin="round"/><path d="M0.55 3.4V2.6L2.2 0.55H10.8L12.45 2.6V3.4Z" fill="url(#gTb)" stroke="#1b52ba" stroke-width="1.1" stroke-linejoin="round"/><path d="M4.5 4.2V10.8M8.6 4.2V10.8" stroke="#8a94ad" stroke-width=".9"/><path d="M1.8 5.6H3.4M5.6 5.6H7.4M9.8 5.6H11.2M1.8 7.8H3.4M5.6 7.8H7.4M9.8 7.8H11.2" stroke="#7f9ad8" stroke-width=".8"/></svg><svg style="left:142px;top:101px" width="13" height="12" viewBox="0 0 13 12"><path d="M0.55 11.45V2.6L2.2 0.55H10.8L12.45 2.6V11.45Z" fill="url(#gTbody)" stroke="#1b52ba" stroke-width="1.1" stroke-linejoin="round"/><path d="M0.55 3.4V2.6L2.2 0.55H10.8L12.45 2.6V3.4Z" fill="url(#gTb)" stroke="#1b52ba" stroke-width="1.1" stroke-linejoin="round"/><path d="M4.5 4.2V10.8M8.6 4.2V10.8" stroke="#8a94ad" stroke-width=".9"/><path d="M1.8 5.6H3.4M5.6 5.6H7.4M9.8 5.6H11.2M1.8 7.8H3.4M5.6 7.8H7.4M9.8 7.8H11.2" stroke="#7f9ad8" stroke-width=".8"/></svg><svg style="left:218px;top:101px" width="13" height="12" viewBox="0 0 13 12"><path d="M0.55 11.45V2.6L2.2 0.55H10.8L12.45 2.6V11.45Z" fill="url(#gTbody)" stroke="#1b52ba" stroke-width="1.1" stroke-linejoin="round"/><path d="M0.55 3.4V2.6L2.2 0.55H10.8L12.45 2.6V3.4Z" fill="url(#gTb)" stroke="#1b52ba" stroke-width="1.1" stroke-linejoin="round"/><path d="M4.5 4.2V10.8M8.6 4.2V10.8" stroke="#8a94ad" stroke-width=".9"/><path d="M1.8 5.6H3.4M5.6 5.6H7.4M9.8 5.6H11.2M1.8 7.8H3.4M5.6 7.8H7.4M9.8 7.8H11.2" stroke="#7f9ad8" stroke-width=".8"/></svg><svg style="left:279px;top:101px" width="13" height="12" viewBox="0 0 13 12"><path d="M0.55 11.45V2.6L2.2 0.55H10.8L12.45 2.6V11.45Z" fill="url(#gTbody)" stroke="#1b52ba" stroke-width="1.1" stroke-linejoin="round"/><path d="M0.55 3.4V2.6L2.2 0.55H10.8L12.45 2.6V3.4Z" fill="url(#gTb)" stroke="#1b52ba" stroke-width="1.1" stroke-linejoin="round"/><path d="M4.5 4.2V10.8M8.6 4.2V10.8" stroke="#8a94ad" stroke-width=".9"/><path d="M1.8 5.6H3.4M5.6 5.6H7.4M9.8 5.6H11.2M1.8 7.8H3.4M5.6 7.8H7.4M9.8 7.8H11.2" stroke="#7f9ad8" stroke-width=".8"/></svg><svg style="left:340px;top:101px" width="13" height="12" viewBox="0 0 13 12"><path d="M0.55 11.45V2.6L2.2 0.55H10.8L12.45 2.6V11.45Z" fill="url(#gTbody)" stroke="#1b52ba" stroke-width="1.1" stroke-linejoin="round"/><path d="M0.55 3.4V2.6L2.2 0.55H10.8L12.45 2.6V3.4Z" fill="url(#gTb)" stroke="#1b52ba" stroke-width="1.1" stroke-linejoin="round"/><path d="M4.5 4.2V10.8M8.6 4.2V10.8" stroke="#8a94ad" stroke-width=".9"/><path d="M1.8 5.6H3.4M5.6 5.6H7.4M9.8 5.6H11.2M1.8 7.8H3.4M5.6 7.8H7.4M9.8 7.8H11.2" stroke="#7f9ad8" stroke-width=".8"/></svg><svg style="left:439px;top:98px" width="10" height="7" viewBox="0 0 10 7"><path d="M0.6 0.5L4 3.5L0.6 6.5M5.6 0.5L9 3.5L5.6 6.5" fill="none" stroke="#6a6fa6" stroke-width="1.2"/></svg><svg style="left:504.5px;top:100px" width="13" height="13" viewBox="0 0 13 13"><path d="M4.4 1H8.6V4.4H12V8.6H8.6V12H4.4V8.6H1V4.4H4.4Z" fill="#fff" stroke="#000" stroke-width="1.9" stroke-linejoin="round"/></svg><svg style="left:525.5px;top:98.5px" width="16.4" height="16.4" viewBox="0 0 16.4 16.4"><circle cx="8.2" cy="8.2" r="7" fill="#e6e6e6" stroke="#a0a0a0" stroke-width="2"/><path d="M3.2 3.2L13.2 13.2" stroke="#a8a8a8" stroke-width="1.5"/><path d="M5.4 10.6L8 5.6M8.2 11.4L11 6.2M5 8.4H11.4" stroke="#9a9a9a" stroke-width="1.1" fill="none"/></svg><div class="a" style="left:548px;top:97.2px;width:1px;height:19.6px;background:#8c8c8c"></div><svg style="left:557px;top:99px" width="14.5" height="14.5" viewBox="0 0 14.5 14.5"><path d="M5.2 5L13 13.4" stroke="#222" stroke-width="2" stroke-linecap="round"/><path d="M5.2 5L6.6 6.6" stroke="#e8c020" stroke-width="2" stroke-linecap="round"/><path d="M0 -2.4L.6 -.6L2.4 0L.6 .6L0 2.4L-.6 .6L-2.4 0L-.6 -.6Z" transform="translate(2.6 2.6)" fill="#fff" stroke="#222" stroke-width=".8"/><path d="M0 -2.4L.6 -.6L2.4 0L.6 .6L0 2.4L-.6 .6L-2.4 0L-.6 -.6Z" transform="translate(10.6 2.8) scale(.9)" fill="#fff" stroke="#222" stroke-width=".8"/><path d="M0 -2.4L.6 -.6L2.4 0L.6 .6L0 2.4L-.6 .6L-2.4 0L-.6 -.6Z" transform="translate(3.4 11.2) scale(.9)" fill="#fff" stroke="#222" stroke-width=".8"/></svg><div class="a" style="left:579px;top:97.2px;width:1px;height:19.6px;background:#8c8c8c"></div><svg style="left:588px;top:99px" width="16" height="16" viewBox="0 0 16 16"><rect x="0.6" y="0.6" width="14.8" height="14.8" fill="#eaf2fd" stroke="#2f6ad0" stroke-width="1.2"/><rect x="5.6" y="0.6" width="4.8" height="14.8" fill="#5a8fe6"/><path d="M5.6 0.6V15.4M10.4 0.6V15.4" stroke="#2f6ad0" stroke-width="1"/><path d="M0.6 5.4H15.4M0.6 10.4H15.4" stroke="#9dbcf0" stroke-width=".9"/></svg><svg style="left:606.6px;top:104.4px" width="10" height="6" viewBox="0 0 10 6"><path d="M0.3 0.5H9.7L5 5.6Z" fill="#000"/></svg><svg style="left:625px;top:101px" width="14.5" height="14" viewBox="0 0 14.5 14"><path d="M0.55 11.45V2.6L2.2 0.55H10.8L12.45 2.6V11.45Z" fill="url(#gTbody)" stroke="#1b52ba" stroke-width="1.1" stroke-linejoin="round"/><path d="M0.55 3.4V2.6L2.2 0.55H10.8L12.45 2.6V3.4Z" fill="url(#gTb)" stroke="#1b52ba" stroke-width="1.1" stroke-linejoin="round"/><path d="M4.5 4.2V10.8M8.6 4.2V10.8" stroke="#8a94ad" stroke-width=".9"/><path d="M1.8 5.6H3.4M5.6 5.6H7.4M9.8 5.6H11.2M1.8 7.8H3.4M5.6 7.8H7.4M9.8 7.8H11.2" stroke="#7f9ad8" stroke-width=".8"/><path d="M6.4 10.2L9 13L13.8 7.8" fill="none" stroke="#14800f" stroke-width="2.4"/><path d="M6.4 10.2L9 13L13.8 7.8" fill="none" stroke="#4ccc38" stroke-width="1.1"/></svg><svg style="left:648px;top:101px" width="14.5" height="14" viewBox="0 0 14.5 14"><path d="M0.55 11.45V2.6L2.2 0.55H10.8L12.45 2.6V11.45Z" fill="#f6f6f6" stroke="#8e8e8e" stroke-width="1.1" stroke-linejoin="round"/><path d="M0.55 3.4V2.6L2.2 0.55H10.8L12.45 2.6V3.4Z" fill="#8e8e8e" stroke="#8e8e8e" stroke-width="1.1" stroke-linejoin="round"/><path d="M4.5 4.2V10.8M8.6 4.2V10.8" stroke="#a0a0a0" stroke-width=".9"/><path d="M1.8 5.6H3.4M5.6 5.6H7.4M1.8 7.8H3.4M5.6 7.8H7.4" stroke="#a8a8a8" stroke-width=".8"/><path d="M9.4 4.8L13.8 8.2L9.4 11.6Z" fill="#c4c4c4" stroke="#9a9a9a" stroke-width=".6"/></svg><div class="a" style="left:669px;top:97.2px;width:1px;height:19.6px;background:#8c8c8c"></div><svg style="left:679.5px;top:99.5px" width="15" height="15" viewBox="0 0 15 15"><text x="0" y="7" font-family="Liberation Serif,serif" font-weight="bold" font-style="italic" font-size="8.8" fill="#1f4fa8" stroke="#1f4fa8" stroke-width=".35">A</text><text x="0" y="14.4" font-family="Liberation Serif,serif" font-weight="bold" font-style="italic" font-size="8.8" fill="#d02a2a" stroke="#d02a2a" stroke-width=".35">Z</text><path d="M11.2 0.4V14" stroke="#222" stroke-width="1.3"/><path d="M8.8 10.6L11.2 14.2L13.6 10.6" fill="none" stroke="#222" stroke-width="1.2"/></svg><svg style="left:702.5px;top:99.5px" width="15" height="15" viewBox="0 0 15 15"><text x="0" y="7" font-family="Liberation Serif,serif" font-weight="bold" font-style="italic" font-size="8.8" fill="#d02a2a" stroke="#d02a2a" stroke-width=".35">Z</text><text x="0" y="14.4" font-family="Liberation Serif,serif" font-weight="bold" font-style="italic" font-size="8.8" fill="#1f4fa8" stroke="#1f4fa8" stroke-width=".35">A</text><path d="M11.2 0.4V14" stroke="#222" stroke-width="1.3"/><path d="M8.8 10.6L11.2 14.2L13.6 10.6" fill="none" stroke="#222" stroke-width="1.2"/></svg><svg style="left:726px;top:99.5px" width="15" height="15" viewBox="0 0 15 15"><text x="0" y="7" font-family="Liberation Serif,serif" font-weight="bold" font-style="italic" font-size="8.8" fill="#4a3fc0" stroke="#4a3fc0" stroke-width=".35">0</text><text x="0" y="14.4" font-family="Liberation Serif,serif" font-weight="bold" font-style="italic" font-size="8.8" fill="#3a9a1a" stroke="#3a9a1a" stroke-width=".35">9</text><path d="M11.2 0.4V14" stroke="#222" stroke-width="1.3"/><path d="M8.8 10.6L11.2 14.2L13.6 10.6" fill="none" stroke="#222" stroke-width="1.2"/></svg><svg style="left:749px;top:99.5px" width="15" height="15" viewBox="0 0 15 15"><text x="0" y="7" font-family="Liberation Serif,serif" font-weight="bold" font-style="italic" font-size="8.8" fill="#3a9a1a" stroke="#3a9a1a" stroke-width=".35">9</text><text x="0" y="14.4" font-family="Liberation Serif,serif" font-weight="bold" font-style="italic" font-size="8.8" fill="#4a3fc0" stroke="#4a3fc0" stroke-width=".35">0</text><path d="M11.2 0.4V14" stroke="#222" stroke-width="1.3"/><path d="M8.8 10.6L11.2 14.2L13.6 10.6" fill="none" stroke="#222" stroke-width="1.2"/></svg><svg style="left:770px;top:99px" width="15.5" height="15" viewBox="0 0 15.5 15"><path d="M0 3.2H5 M0 7.2H7 M0 11.2H9" stroke="#1f2f58" stroke-width="1.6"/><path d="M12.6 0.4V14.2" stroke="#333" stroke-width="1"/><path d="M10.4 10.8L12.6 14.4L14.8 10.8" fill="none" stroke="#333" stroke-width="1"/></svg><svg style="left:792.7px;top:99px" width="15.5" height="15" viewBox="0 0 15.5 15"><path d="M0 3.2H9 M0 7.2H7 M0 11.2H5" stroke="#1f2f58" stroke-width="1.6"/><path d="M12.6 0.4V14.2" stroke="#333" stroke-width="1"/><path d="M10.4 10.8L12.6 14.4L14.8 10.8" fill="none" stroke="#333" stroke-width="1"/></svg><svg style="left:816.7px;top:100px" width="14.2" height="13.2" viewBox="0 0 14.2 13.2"><rect x="0.6" y="0.6" width="13" height="12" fill="#fff" stroke="#2a5fc4" stroke-width="1.2"/><rect x="0.6" y="0.6" width="13" height="2.4" fill="#2a5fc4"/><path d="M4.4 4.6V10.6M2.4 8.4L4.4 10.8L6.4 8.4" fill="none" stroke="#1f6ad8" stroke-width="1.2"/><path d="M9.6 11V5M7.6 7.2L9.6 4.8L11.6 7.2" fill="none" stroke="#e02020" stroke-width="1.2"/></svg><div class="a" style="left:838px;top:97.2px;width:1px;height:19.6px;background:#8c8c8c"></div><svg style="left:847px;top:99px" width="16" height="15" viewBox="0 0 16 15"><text x="0.4" y="6.6" font-family="Liberation Sans,sans-serif" font-weight="bold" font-size="7.6" fill="#111">Abc</text><text x="0.4" y="14.2" font-family="Liberation Sans,sans-serif" font-weight="bold" font-size="7.6" fill="#5a1010">Abc</text><path d="M0 11.4H15.6" stroke="#c01818" stroke-width="1.3"/></svg><svg style="left:871px;top:100px" width="14.2" height="13.2" viewBox="0 0 14.2 13.2"><rect x="0.6" y="0.6" width="13" height="12" fill="#fff" stroke="#2a5fc4" stroke-width="1.2"/><rect x="0.6" y="0.6" width="13" height="2.4" fill="#2a5fc4"/><text x="2.2" y="7.6" font-family="Liberation Sans,sans-serif" font-weight="bold" font-size="4.6" fill="#222">Abc</text><text x="2.2" y="11.4" font-family="Liberation Sans,sans-serif" font-weight="bold" font-size="4.6" fill="#c01818">abc</text><path d="M2 9.9H12" stroke="#c01818" stroke-width=".6"/></svg><div class="a" style="left:892px;top:97.2px;width:1px;height:19.6px;background:#8c8c8c"></div><svg style="left:900.6px;top:101px" width="15.8" height="11.4" viewBox="0 0 15.8 11.4"><rect x="0.4" y="0.4" width="6.8" height="10.4" fill="#f2f6fd" stroke="#4f83e0" stroke-width=".7"/><rect x="0.4" y="0.4" width="6.8" height="2.6" fill="#4f83e0"/><path d="M2.7 3V10.8M4.9 3V10.8M0.4 5.6H7.2M0.4 8.2H7.2" stroke="#a9c3ee" stroke-width=".7"/><rect x="8.5" y="0.4" width="6.8" height="10.4" fill="#f2f6fd" stroke="#4f83e0" stroke-width=".7"/><rect x="8.5" y="0.4" width="6.8" height="2.6" fill="#4f83e0"/><path d="M10.8 3V10.8M13 3V10.8M8.5 5.6H15.3M8.5 8.2H15.3" stroke="#a9c3ee" stroke-width=".7"/></svg><svg style="left:924.6px;top:99.5px" width="16" height="13.4" viewBox="0 0 16 13.4"><rect x="0.5" y="2.6" width="8.6" height="10" fill="#f0f0f0" stroke="#8a8a8a" stroke-width=".9"/><rect x="0.5" y="2.6" width="3" height="10" fill="#9a9a9a"/><path d="M3.5 2.6V12.6M6.3 2.6V12.6M0.5 6H9.1M0.5 9.2H9.1" stroke="#8a8a8a" stroke-width=".8"/><path d="M8.6 2.4C9 0 13.4 0 13.4 3.4V5" fill="none" stroke="#7a7a7a" stroke-width="1.3"/><path d="M11 4.6L13.4 7.6L15.6 4.6Z" fill="#7a7a7a"/></svg><div class="a" style="left:946px;top:97.2px;width:1px;height:19.6px;background:#8c8c8c"></div><svg style="left:956px;top:99.5px" width="14.4" height="14.4" viewBox="0 0 14.4 14.4"><rect x="0.2" y="0.4" width="5.6" height="13.6" fill="#ead0d6"/><text x="1" y="6.4" font-family="Liberation Sans,sans-serif" font-weight="bold" font-size="7" fill="#c0143c">1</text><text x="1" y="13.4" font-family="Liberation Sans,sans-serif" font-weight="bold" font-size="7" fill="#c0143c">2</text><path d="M7.6 3.8H14M7.6 10.6H14" stroke="#7c7c7c" stroke-width="1.6"/></svg><svg style="left:978.8px;top:99px" width="15" height="14.6" viewBox="0 0 15 14.6"><text x="0" y="6.6" font-family="Liberation Sans,sans-serif" font-weight="bold" font-size="7.4" letter-spacing=".6" fill="#c0143c">123</text><path d="M0.8 8.6V13.6H14V8.6M4.1 11V13.6M7.4 11V13.6M10.7 11V13.6" fill="none" stroke="#5a1018" stroke-width="1.2"/></svg><div class="a" style="left:1000px;top:97.2px;width:1px;height:19.6px;background:#8c8c8c"></div><svg style="left:1008.8px;top:99px" width="16.4" height="5.4" viewBox="0 0 16.4 5.4"><rect x="0.6" y="0.6" width="15.2" height="4.2" fill="#eef3fc" stroke="#3a5fb8" stroke-width="1.1"/><path d="M5.6 0.6V4.8M10.8 0.6V4.8" stroke="#3a5fb8" stroke-width=".9"/></svg><svg style="left:1027.6px;top:104.6px" width="10" height="6" viewBox="0 0 10 6"><path d="M0.3 0.5H9.7L5 5.6Z" fill="#000"/></svg><div class="a" style="left:1044px;top:97.2px;width:1px;height:19.6px;background:#8c8c8c"></div><svg style="left:1054px;top:100px" width="14" height="14" viewBox="0 0 14 14"><rect x="10" y="0.4" width="3.2" height="6" fill="#fff" stroke="#adadad" stroke-width="1"/><rect x="10" y="0.4" width="3.2" height="2.6" fill="#adadad"/><rect x="0.8" y="10.4" width="6" height="3.2" fill="#fff" stroke="#adadad" stroke-width="1"/><rect x="0.8" y="10.4" width="2.8" height="3.2" fill="#adadad"/><path d="M2.4 7.2C2.4 4 5 2.4 7.4 2.4" fill="none" stroke="#adadad" stroke-width="1.1"/><path d="M6.2 0.6L8.4 2.4L6.2 4.2M0.6 5.8L2.4 8L4.2 5.8" fill="none" stroke="#adadad" stroke-width="1.1"/></svg><svg style="left:1077px;top:100px" width="14.4" height="14" viewBox="0 0 14.4 14"><rect x="0.2" y="0.2" width="3.4" height="3.4" fill="#adadad"/><rect x="5" y="0.2" width="9" height="3.4" fill="#adadad"/><rect x="0.2" y="5" width="3.4" height="8.8" fill="#adadad"/><path d="M5.4 12.4H7.4L12 7.6" fill="none" stroke="#adadad" stroke-width="1"/><path d="M9.8 6.6L12.6 6.2L12.2 9Z" fill="#adadad"/></svg><svg style="left:1100px;top:100px" width="14.4" height="14" viewBox="0 0 14.4 14"><rect x="0.2" y="0.2" width="3.4" height="3.4" fill="#adadad"/><rect x="5" y="0.2" width="9" height="3.4" fill="#adadad"/><rect x="0.2" y="5" width="3.4" height="8.8" fill="#adadad"/><path d="M12.6 5.4V7L7.4 12" fill="none" stroke="#adadad" stroke-width="1"/><path d="M6.2 9.6L6 12.8L9.2 12.6Z" fill="#adadad"/></svg><svg style="left:281px;top:132.6px" width="9.5" height="5.5" viewBox="0 0 9.5 5.5"><path d="M0.6 0.6L4.75 4.6L8.9 0.6" fill="none" stroke="#5c5c5c" stroke-width="1.1"/></svg><svg style="left:281px;top:161.6px" width="9.5" height="5.5" viewBox="0 0 9.5 5.5"><path d="M0.6 0.6L4.75 4.6L8.9 0.6" fill="none" stroke="#5c5c5c" stroke-width="1.1"/></svg><svg style="left:460px;top:132.6px" width="9.5" height="5.5" viewBox="0 0 9.5 5.5"><path d="M0.6 0.6L4.75 4.6L8.9 0.6" fill="none" stroke="#5c5c5c" stroke-width="1.1"/></svg><svg style="left:1022px;top:133px" width="9.5" height="5.5" viewBox="0 0 9.5 5.5"><path d="M0.6 0.6L4.75 4.6L8.9 0.6" fill="none" stroke="#5c5c5c" stroke-width="1.1"/></svg><svg style="left:1080px;top:133px" width="9.5" height="5.5" viewBox="0 0 9.5 5.5"><path d="M0.6 0.6L4.75 4.6L8.9 0.6" fill="none" stroke="#5c5c5c" stroke-width="1.1"/></svg><svg style="left:303.5px;top:132px" width="6.5" height="5" viewBox="0 0 6.5 5"><path d="M0.4 0.4L2.8 2.4L0.4 4.4M3.6 0.4L6 2.4L3.6 4.4" fill="none" stroke="#8e8e8e" stroke-width=".8"/></svg><svg style="left:303.5px;top:161px" width="6.5" height="5" viewBox="0 0 6.5 5"><path d="M0.4 0.4L2.8 2.4L0.4 4.4M3.6 0.4L6 2.4L3.6 4.4" fill="none" stroke="#b23a3a" stroke-width=".9"/></svg><svg style="left:481px;top:128.5px" width="12" height="12.5" viewBox="0 0 12 12.5"><path d="M8.6 2.6A4.6 4.6 0 1 0 10.4 6.8" fill="none" stroke="#a3a3a3" stroke-width="2"/><path d="M5.2 0L9.8 2.6L5.8 5.6Z" fill="#a3a3a3"/></svg><svg style="left:503px;top:130px" width="11.4" height="11" viewBox="0 0 11.4 11"><path d="M0.8 0.8L10.6 10.2M10.6 0.8L0.8 10.2" stroke="#a3a3a3" stroke-width="1.7"/></svg><div class="a" style="left:523px;top:124.5px;width:1px;height:22px;background:#8c8c8c"></div><div class="hot" style="left:529px;top:122px;width:23px;height:25.5px"></div><svg style="left:533px;top:127.5px" width="16" height="16" viewBox="0 0 16 16"><path d="M7.11014 9.21509L1.6 14.6" stroke="#b5682a" stroke-width="2.1" stroke-linecap="round"/><path d="M7.11014 9.21509L1.6 14.6" stroke="#f3b06a" stroke-width="1.1" stroke-linecap="round"/><circle cx="10.4" cy="6" r="4.6" fill="url(#gGl)" stroke="#8fb2e3" stroke-width="1.1"/><path d="M1 2.4H5.4M2.2 4.4H5M3.2 6.4H5" stroke="#c0c8d8" stroke-width=".8"/></svg><div class="a" style="left:554px;top:124.5px;width:1px;height:22px;background:#8c8c8c"></div><svg style="left:563.5px;top:128.8px" width="17" height="12" viewBox="0 0 17 12"><text x="0" y="10" font-family="Liberation Sans,sans-serif" font-size="9.6" fill="#2c2c2c" letter-spacing=".9">.+?</text></svg><svg style="left:588.5px;top:127.2px" width="12" height="12" viewBox="0 0 12 12"><text x="0" y="9.8" font-family="Liberation Sans,sans-serif" font-size="11.5" fill="#2c2c2c">\n</text></svg><svg style="left:610.5px;top:129.5px" width="14" height="11" viewBox="0 0 14 11"><path d="M3.4 0.6H0.8V10H3.4M10.4 0.6H13V10H10.4" fill="none" stroke="#111" stroke-width="1.15"/><path d="M6.3 7.4H7.9V8.8L6.9 10.4" fill="none" stroke="#111" stroke-width="1.2"/></svg><svg style="left:634px;top:130px" width="13.2" height="10" viewBox="0 0 13.2 10"><path d="M0.4 3C3 -0.4 5 1 6.6 2.4C8.2 3.8 10.4 4.4 12.8 1.4M0.4 8C3 4.6 5 6 6.6 7.4C8.2 8.8 10.4 9.4 12.8 6.4" fill="none" stroke="#1616c8" stroke-width="1.3"/></svg><div class="a" style="left:654px;top:124.5px;width:1px;height:22px;background:#8c8c8c"></div><svg style="left:663.4px;top:130px" width="15.5" height="12" viewBox="0 0 15.5 12"><text x="-0.4" y="11" font-family="Liberation Serif,serif" font-weight="bold" font-size="14.6" fill="#cf6872">A</text><text x="9.2" y="7" font-family="Liberation Sans,sans-serif" font-size="10.4" fill="#7f62c0">a</text></svg><svg style="left:685.9px;top:131px" width="15" height="10.4" viewBox="0 0 15 10.4"><text x="3" y="7.6" font-family="Liberation Sans,sans-serif" font-size="12" fill="#3f4f8a">w</text><path d="M0.6 7.4V9.4H2.6M12.4 9.4H14.4V7.4" fill="none" stroke="#1616c8" stroke-width="1.2"/></svg><svg style="left:711px;top:132.6px" width="12" height="3" viewBox="0 0 12 3"><rect x="0" y="0" width="12" height="3" rx=".6" fill="#2f4a82"/></svg><svg style="left:733.6px;top:131px" width="12.6" height="10" viewBox="0 0 12.6 10"><path d="M0.3 0.5H9.1L5.8 4.2V9.4H3.6V4.2Z" fill="#3c78d8"/><path d="M1.4 1H8" stroke="#9cc0f5" stroke-width=".7"/><path d="M8.4 5.8L12.2 9.6M12.2 5.8L8.4 9.6" stroke="#d83020" stroke-width="1.2"/></svg><div class="a" style="left:754px;top:124.5px;width:1px;height:22px;background:#8c8c8c"></div><svg style="left:765.6px;top:128px" width="12.6" height="15" viewBox="0 0 12.6 15"><path d="M0.5 0.5H9L11.9 3.4V14.5H0.5Z" fill="url(#gPg)" stroke="#7f93d0" stroke-width="1"/><path d="M9 0.5V3.4H11.9" fill="#f6f8fe" stroke="#7f93d0" stroke-width="0.8"/><path d="M2.6 5.4H9.2M2.6 8.2H9.2M2.6 11H9.2" stroke="#c41818" stroke-width="1.7"/></svg><svg style="left:789px;top:128px" width="12.6" height="15" viewBox="0 0 12.6 15"><path d="M0.5 0.5H9L11.9 3.4V14.5H0.5Z" fill="url(#gPg)" stroke="#8b9cd4" stroke-width="1"/><path d="M9 0.5V3.4H11.9" fill="#f6f8fe" stroke="#8b9cd4" stroke-width="0.8"/><path d="M2.6 5.4H9.2M2.6 11H9.2" stroke="#b9bfc9" stroke-width="1.5"/><path d="M2.6 8.2H9.2" stroke="#d9c9a0" stroke-width="1.5"/></svg><div class="a" style="left:808px;top:124.5px;width:1px;height:22px;background:#8c8c8c"></div><svg style="left:821.4px;top:130px" width="8.2" height="10.2" viewBox="0 0 8.2 10.2"><path d="M4.1 0V9.6" stroke="#1f78e0" stroke-width="1.4"/><path d="M0.5 5.6L4.1 9.8L7.7 5.6" fill="none" stroke="#1f78e0" stroke-width="1.3"/></svg><svg style="left:835.6px;top:132.4px" width="10" height="6" viewBox="0 0 10 6"><path d="M0.3 0.5H9.7L5 5.6Z" fill="#000"/></svg><div class="a" style="left:852px;top:124.5px;width:1px;height:22px;background:#8c8c8c"></div><svg style="left:861.8px;top:128px" width="14.2" height="14.2" viewBox="0 0 14.2 14.2"><rect x="0.6" y="0.6" width="13" height="13" fill="#fff" stroke="#2a5fc4" stroke-width="1.2"/><rect x="0.6" y="0.6" width="13" height="2.6" fill="#2a5fc4"/><path d="M3.6 5.4H10.6L8.2 8V11.6H6V8Z" fill="#3c78d8"/></svg><div class="a" style="left:883px;top:124.5px;width:1px;height:22px;background:#8c8c8c"></div><div class="hot" style="left:889px;top:122px;width:23px;height:25.5px"></div><svg style="left:894.4px;top:127px" width="12.6" height="16" viewBox="0 0 12.6 16"><path d="M3.5 6.4V4.2C3.5 0.4 9.1 0.4 9.1 4.2V6.4" fill="none" stroke="#c9981c" stroke-width="2.4"/><path d="M3.5 6.4V4.2C3.5 0.4 9.1 0.4 9.1 4.2V6.4" fill="none" stroke="#f6e08a" stroke-width="1"/><rect x="0.6" y="5.8" width="11.4" height="9.6" rx="1" fill="url(#gLk)" stroke="#b88a18" stroke-width=".9"/><path d="M1.4 8H11.2M1.4 10.4H11.2M1.4 12.8H11.2" stroke="#e8c44a" stroke-width=".6"/><rect x="5.4" y="9" width="1.8" height="3" rx=".4" fill="#4a3a10"/></svg><div class="a" style="left:914px;top:124.5px;width:1px;height:22px;background:#8c8c8c"></div><svg style="left:925.6px;top:127.6px" width="12.2" height="13.4" viewBox="0 0 12.2 13.4"><path d="M0.4 9.4L4.4 0.6L6 3.6" fill="none" stroke="#6e6e6e" stroke-width="1.3"/><path d="M3.4 1.6L11 6.2H2.4Z" fill="#9c9c9c"/><path d="M4.4 7.4H11.8L9.2 10V13H7.2V10Z" fill="#8e8e8e"/></svg><svg style="left:947.6px;top:126.8px" width="14" height="14.2" viewBox="0 0 14 14.2"><rect x="0.5" y="3.6" width="7.6" height="10" fill="#f2f2f2" stroke="#8e8e8e" stroke-width=".9"/><rect x="0.5" y="3.6" width="7.6" height="2.2" fill="#9a9a9a"/><path d="M2 8H6.4M2 10.4H6.4" stroke="#9a9a9a" stroke-width=".8"/><path d="M6.6 3C7 0.4 11.2 0.4 11.2 3.6V5.4" fill="none" stroke="#777" stroke-width="1.3"/><path d="M8.8 5L11.2 8L13.6 5Z" fill="#777"/></svg><svg style="left:964.6px;top:132.4px" width="10" height="6" viewBox="0 0 10 6"><path d="M0.3 0.5H9.7L5 5.6Z" fill="#7a7a7a"/></svg><div class="a" style="left:981px;top:124.5px;width:1px;height:22px;background:#8c8c8c"></div><div class="a" style="left:1039px;top:124.5px;width:1px;height:22px;background:#8c8c8c"></div><svg style="left:321.5px;top:156px" width="16" height="16" viewBox="0 0 16 16"><path d="M7.34731 9.05269L1.6 14.8" stroke="#b5682a" stroke-width="2.1" stroke-linecap="round"/><path d="M7.34731 9.05269L1.6 14.8" stroke="#f3b06a" stroke-width="1.1" stroke-linecap="round"/><circle cx="10.6" cy="5.8" r="4.6" fill="url(#gGl)" stroke="#8fb2e3" stroke-width="1.1"/><path d="M9.6 8.4C5.4 9.4 3.6 6 4.8 3.6" fill="none" stroke="#14800f" stroke-width="2.7"/><path d="M9.6 8.4C5.4 9.4 3.6 6 4.8 3.6" fill="none" stroke="#4ccc38" stroke-width="1.1"/><path d="M1.2 4.8L5.6 0.2L8.6 5.6Z" fill="#3dbf2a" stroke="#14800f" stroke-width=".7" stroke-linejoin="round"/></svg><svg style="left:344.8px;top:156px" width="16" height="16" viewBox="0 0 16 16"><path d="M7.34731 9.05269L1.6 14.8" stroke="#b5682a" stroke-width="2.1" stroke-linecap="round"/><path d="M7.34731 9.05269L1.6 14.8" stroke="#f3b06a" stroke-width="1.1" stroke-linecap="round"/><circle cx="10.6" cy="5.8" r="4.6" fill="url(#gGl)" stroke="#8fb2e3" stroke-width="1.1"/><path d="M3.4 6.6C4 1.4 10 0.6 11.4 4.6" fill="none" stroke="#14800f" stroke-width="2.7"/><path d="M3.4 6.6C4 1.4 10 0.6 11.4 4.6" fill="none" stroke="#4ccc38" stroke-width="1.1"/><path d="M0.2 4.4L7 5.6L2.4 10Z" fill="#3dbf2a" stroke="#14800f" stroke-width=".7" stroke-linejoin="round"/></svg><div class="a" style="left:367px;top:153.5px;width:1px;height:22px;background:#8c8c8c"></div><svg style="left:375.4px;top:156px" width="16" height="16" viewBox="0 0 16 16"><path d="M7.11014 9.21509L1.6 14.6" stroke="#b5682a" stroke-width="2.1" stroke-linecap="round"/><path d="M7.11014 9.21509L1.6 14.6" stroke="#f3b06a" stroke-width="1.1" stroke-linecap="round"/><circle cx="10.4" cy="6" r="4.6" fill="url(#gGl)" stroke="#8fb2e3" stroke-width="1.1"/><path d="M1 2.4H5.4M2.2 4.4H5M3.2 6.4H5" stroke="#c0c8d8" stroke-width=".8"/></svg><svg style="left:400.6px;top:157px" width="13" height="14" viewBox="0 0 13 14"><rect x="0.5" y="0.5" width="7" height="8.6" fill="#eef2fb" stroke="#8a97c4" stroke-width=".8"/><rect x="2.6" y="2.4" width="7" height="8.6" fill="#eef2fb" stroke="#8a97c4" stroke-width=".8"/><path d="M5.1 4.7H10.4L12.1 6.4V13.3H5.1Z" fill="#eef4fd" stroke="#4f74c8" stroke-width="1"/><path d="M10.4 4.7V6.4H12.1" fill="#f6f8fe" stroke="#4f74c8" stroke-width="0.8"/><path d="M6.2 8.6H10.8M6.2 10.4H10.8M6.2 12.2H10.8" stroke="#2f56b8" stroke-width=".9"/></svg><div class="a" style="left:421px;top:153.5px;width:1px;height:22px;background:#8c8c8c"></div><svg style="left:430.4px;top:157.8px" width="17" height="12" viewBox="0 0 17 12"><text x="0" y="10" font-family="Liberation Sans,sans-serif" font-size="9.6" fill="#2c2c2c" letter-spacing=".9">.+?</text></svg><svg style="left:455.4px;top:156.2px" width="12" height="12" viewBox="0 0 12 12"><text x="0" y="9.8" font-family="Liberation Sans,sans-serif" font-size="11.5" fill="#2c2c2c">\n</text></svg><svg style="left:477.4px;top:158.5px" width="14" height="11" viewBox="0 0 14 11"><path d="M3.4 0.6H0.8V10H3.4M10.4 0.6H13V10H10.4" fill="none" stroke="#111" stroke-width="1.15"/><path d="M6.3 7.4H7.9V8.8L6.9 10.4" fill="none" stroke="#111" stroke-width="1.2"/></svg><svg style="left:500.9px;top:159px" width="13.2" height="10" viewBox="0 0 13.2 10"><path d="M0.4 3C3 -0.4 5 1 6.6 2.4C8.2 3.8 10.4 4.4 12.8 1.4M0.4 8C3 4.6 5 6 6.6 7.4C8.2 8.8 10.4 9.4 12.8 6.4" fill="none" stroke="#1616c8" stroke-width="1.3"/></svg><div class="a" style="left:521px;top:153.5px;width:1px;height:22px;background:#8c8c8c"></div><svg style="left:530.6px;top:159px" width="15.5" height="12" viewBox="0 0 15.5 12"><text x="-0.4" y="11" font-family="Liberation Serif,serif" font-weight="bold" font-size="14.6" fill="#cf6872">A</text><text x="9.2" y="7" font-family="Liberation Sans,sans-serif" font-size="10.4" fill="#7f62c0">a</text></svg><svg style="left:553.1px;top:160px" width="15" height="10.4" viewBox="0 0 15 10.4"><text x="3" y="7.6" font-family="Liberation Sans,sans-serif" font-size="12" fill="#3f4f8a">w</text><path d="M0.6 7.4V9.4H2.6M12.4 9.4H14.4V7.4" fill="none" stroke="#1616c8" stroke-width="1.2"/></svg><div class="hot" style="left:573px;top:151px;width:22.5px;height:25px"></div><svg style="left:579px;top:160px" width="11.2" height="8.4" viewBox="0 0 11.2 8.4"><path d="M2.8 8V1M0.4 3.6L2.8 0.8L5.2 3.6" fill="none" stroke="#2a8a12" stroke-width="1.3"/><path d="M8.4 0.4V7.4M6 4.8L8.4 7.6L10.8 4.8" fill="none" stroke="#2a8a12" stroke-width="1.3"/></svg><div class="hot" style="left:596.5px;top:151px;width:22.5px;height:25px"></div><svg style="left:603px;top:158px" width="10" height="11.6" viewBox="0 0 10 11.6"><ellipse cx="5" cy="5.8" rx="4.4" ry="5.4" fill="#4fe63a" stroke="#167a10" stroke-width=".8"/><path d="M5 0.4V11.2M2.5 1.4V10.2M7.5 1.4V10.2M0.8 3.6H9.2M0.6 5.8H9.4M0.8 8H9.2" stroke="#1f8a18" stroke-width=".55"/></svg><svg style="left:622px;top:156px" width="16" height="16" viewBox="0 0 16 16"><path d="M0.4 2.86L1.764 4.348L4.368 1" fill="none" stroke="#e0451c" stroke-width="1.5"/><path d="M0.4 7.66L1.764 9.148L4.368 5.8" fill="none" stroke="#e0451c" stroke-width="1.5"/><circle cx="2.2" cy="13.2" r="1.5" fill="#2aa02a"/><rect x="5.6" y="3.4" width="10.2" height="2.1" rx="1.05" fill="#8cc3cf" stroke="#3f8496" stroke-width=".7"/><rect x="5.6" y="7.6" width="10.2" height="2.1" rx="1.05" fill="#8cc3cf" stroke="#3f8496" stroke-width=".7"/><rect x="5.6" y="11.8" width="10.2" height="2.1" rx="1.05" fill="#8cc3cf" stroke="#3f8496" stroke-width=".7"/></svg><div class="a" style="left:644px;top:153.5px;width:1px;height:22px;background:#8c8c8c"></div><svg style="left:654.3px;top:158.5px" width="13.8" height="11" viewBox="0 0 13.8 11"><rect x="0.5" y="0.5" width="12.6" height="9.4" fill="#f4f4f4" stroke="#8a8a8a" stroke-width=".9"/><rect x="1.6" y="1.6" width="10.4" height="4.4" fill="#2f62c8"/><path d="M7 3.6H12" stroke="#dbe6fb" stroke-width=".9"/><path d="M1.6 7.8H12" stroke="#9a9a9a" stroke-width=".8"/><path d="M1 10.4H13.4" stroke="#b5b5b5" stroke-width=".8"/></svg><div class="a" style="left:675px;top:153.5px;width:1px;height:22px;background:#8c8c8c"></div><svg style="left:687.6px;top:159px" width="10" height="9" viewBox="0 0 10 9"><path d="M0.5 2.6H4.6V0.4L9.4 4.4L4.6 8.4V6.2H0.5Z" fill="#52cc22" stroke="#2a8a12" stroke-width=".8" stroke-linejoin="round"/></svg><svg style="left:10px;top:9px" width="20" height="20" viewBox="0 0 20 20"><g transform="scale(1)"><path d="M0.4 0.4L3.4 2.6H19.8V19.6H3.4L0.4 16.8Z" fill="#8f8db2"/><path d="M16.6 2.2L19.8 2.6V19.6H3.4L0.4 16.8H16.6Z" fill="#8583aa"/><rect x="0.5" y="0.5" width="16.2" height="16.4" fill="#fbfbff" stroke="#b4b2d2" stroke-width=".8"/><path d="M2.6 4.4H10.4M2.6 6.2H9.6M2.6 8H8.6M2.6 9.8H7.8M2.6 11.6H7" stroke="#dcdaf0" stroke-width=".8"/><path d="M14.2 0.3L17.6 1.6L10.2 15.4L8 16.8L7.6 14.2Z" fill="#e8ae4e" stroke="#a8682a" stroke-width=".5"/><path d="M16.4 1.2L17.6 1.6L10.2 15.4L9.2 16Z" fill="#b8742e"/><path d="M14.2 0.3L17.6 1.6L16.4 3.8L13 2.6Z" fill="#d8404c"/><path d="M8 16.8L7.6 14.2L10.2 15.4Z" fill="#3a3020"/></g></svg><svg style="left:10px;top:183px" width="17" height="18.4" viewBox="0 0 17 18.4"><path d="M0.3 0.6L1.6 16.2L4 18H14.2L16.6 16.4L15.6 1Z" fill="#8d8bb0"/><path d="M1.4 0.5H14.2L14.6 15.6L13 17H3.2L1.8 15.6Z" fill="#fafaff" stroke="#a4a2c6" stroke-width=".8"/><path d="M2 1H14" stroke="#c9c7e0" stroke-width="1"/><path d="M4 4.4H10.4M4 6.4H10M4 8.4H9.4M4 10.4H8.6M4 12.4H8.4M4 14.4H8" stroke="#b9bfe6" stroke-width=".8"/><path d="M14 0.4L16.8 1.6L11 12.6L9.2 13.8L9.2 11.6Z" fill="#e8ae4e" stroke="#a8682a" stroke-width=".5"/><path d="M14 0.4L16.8 1.6L15.8 3.6L13 2.4Z" fill="#c8403c"/><path d="M9.2 13.8L9.2 11.8L10.8 12.8Z" fill="#3a3020"/></svg><svg style="left:130px;top:191px" width="8" height="8" viewBox="0 0 8 8"><path d="M0.5 0.5L7.5 7.5M7.5 0.5L0.5 7.5" stroke="#808080" stroke-width="1.2"/></svg><div class="a" style="left:18px;top:214px;width:1px;height:30px;background:#000"></div><span class="t" style="left:20.25px;top:212.35px;font-size:22.6px;color:#000;font-weight:bold;line-height:36px;transform:scaleX(0.7111);">{</span><svg style="left:28px;top:221.75px" width="10" height="15" viewBox="0 0 10 15"><path d="M5 0V14" fill="none" stroke="#3a96e0" stroke-width="1.5"/><path d="M0.4 7.4L5 14.4L9.6 7.4" fill="none" stroke="#3a96e0" stroke-width="1.1"/></svg><span class="t" style="left:46.87px;top:248.35px;font-size:24.5px;color:#dc08d0;line-height:36px;transform:scaleX(0.7786);">&quot;</span><span class="t" style="left:56.84px;top:248.35px;font-size:24.5px;color:#dc08d0;line-height:36px;transform:scaleX(1.0088);">host</span><span class="t" style="left:105.32px;top:248.35px;font-size:24.5px;color:#dc08d0;line-height:36px;transform:scaleX(0.7286);">&quot;</span><span class="t" style="left:112.95px;top:248.35px;font-size:24.5px;color:#000;line-height:36px;">: </span><span class="t" style="left:128.46px;top:248.35px;font-size:24.5px;color:#dc08d0;line-height:36px;transform:scaleX(0.7857);">&quot;</span><span class="t" style="left:137.94px;top:248.35px;font-size:24.5px;color:#dc08d0;line-height:36px;transform:scaleX(0.9050);">127.0.0.1</span><span class="t" style="left:234.09px;top:248.35px;font-size:24.5px;color:#dc08d0;line-height:36px;transform:scaleX(0.8571);">&quot;</span><span class="t" style="left:242.8px;top:248.35px;font-size:24.5px;color:#000;line-height:36px;">,</span><svg style="left:250.5px;top:257.75px" width="10" height="15" viewBox="0 0 10 15"><path d="M5 0V14" fill="none" stroke="#3a96e0" stroke-width="1.5"/><path d="M0.4 7.4L5 14.4L9.6 7.4" fill="none" stroke="#3a96e0" stroke-width="1.1"/></svg><span class="t" style="left:46.87px;top:284.35px;font-size:24.5px;color:#dc08d0;line-height:36px;transform:scaleX(0.7786);">&quot;</span><span class="t" style="left:56.79px;top:284.35px;font-size:24.5px;color:#dc08d0;line-height:36px;transform:scaleX(1.0625);">port</span><span class="t" style="left:103.45px;top:284.35px;font-size:24.5px;color:#dc08d0;line-height:36px;transform:scaleX(0.8000);">&quot;</span><span class="t" style="left:111.65px;top:284.35px;font-size:24.5px;color:#000;line-height:36px;">: </span><span class="t" style="left:125px;top:284.35px;font-size:24.5px;color:#000;line-height:36px;transform:scaleX(0.9475);">8443</span><span class="t" style="left:177.75px;top:284.35px;font-size:24.5px;color:#000;line-height:36px;">,</span><svg style="left:185.6px;top:293.75px" width="10" height="15" viewBox="0 0 10 15"><path d="M5 0V14" fill="none" stroke="#3a96e0" stroke-width="1.5"/><path d="M0.4 7.4L5 14.4L9.6 7.4" fill="none" stroke="#3a96e0" stroke-width="1.1"/></svg><span class="t" style="left:46.87px;top:320.35px;font-size:24.5px;color:#dc08d0;line-height:36px;transform:scaleX(0.7786);">&quot;</span><span class="t" style="left:56.91px;top:320.35px;font-size:24.5px;color:#dc08d0;line-height:36px;transform:scaleX(0.9409);">use_db</span><span class="t" style="left:134.95px;top:320.35px;font-size:24.5px;color:#dc08d0;line-height:36px;transform:scaleX(0.8000);">&quot;</span><span class="t" style="left:143.15px;top:320.35px;font-size:24.5px;color:#000;line-height:36px;">: </span><span class="t" style="left:157.05px;top:320.35px;font-size:24.5px;color:#0000c8;line-height:36px;transform:scaleX(1.0146);">true</span><span class="t" style="left:199.95px;top:320.35px;font-size:24.5px;color:#000;line-height:36px;">,</span><svg style="left:207.5px;top:329.75px" width="10" height="15" viewBox="0 0 10 15"><path d="M5 0V14" fill="none" stroke="#3a96e0" stroke-width="1.5"/><path d="M0.4 7.4L5 14.4L9.6 7.4" fill="none" stroke="#3a96e0" stroke-width="1.1"/></svg><span class="t" style="left:46.87px;top:356.35px;font-size:24.5px;color:#dc08d0;line-height:36px;transform:scaleX(0.7786);">&quot;</span><span class="t" style="left:56.33px;top:356.35px;font-size:24.5px;color:#dc08d0;line-height:36px;transform:scaleX(1.0234);">db_url</span><span class="t" style="left:126.66px;top:356.35px;font-size:24.5px;color:#dc08d0;line-height:36px;transform:scaleX(0.7857);">&quot;</span><span class="t" style="left:134.55px;top:356.35px;font-size:24.5px;color:#000;line-height:36px;">: </span><span class="t" style="left:148.98px;top:356.35px;font-size:24.5px;color:#dc08d0;line-height:36px;transform:scaleX(0.7714);">&quot;</span><span class="t" style="left:157.19px;top:356.35px;font-size:24.5px;color:#dc08d0;line-height:36px;transform:scaleX(1.0624);">postgresql</span><span class="t" style="left:277.55px;top:356.35px;font-size:24.5px;color:#dc08d0;line-height:36px;">:</span><span class="t" style="left:284.55px;top:356.35px;font-size:24.5px;color:#dc08d0;line-height:36px;transform:scaleX(1.2602);">//</span><span class="t" style="left:303.28px;top:356.35px;font-size:24.5px;color:#dc08d0;line-height:36px;transform:scaleX(0.9718);">postgres</span><span class="t" style="left:396.1px;top:356.35px;font-size:24.5px;color:#dc08d0;line-height:36px;">:</span><span class="t" style="left:401.49px;top:356.35px;font-size:24.5px;color:#dc08d0;line-height:36px;transform:scaleX(0.9560);">123456</span><span class="t" style="left:482.4px;top:356.35px;font-size:24.5px;color:#dc08d0;line-height:36px;transform:scaleX(0.8455);">@</span><span class="t" style="left:504.5px;top:356.35px;font-size:24.5px;color:#dc08d0;line-height:36px;transform:scaleX(0.9521);">127.0.0.1:5438</span><span class="t" style="left:662.95px;top:356.35px;font-size:24.5px;color:#dc08d0;line-height:36px;transform:scaleX(0.8000);">&quot;</span><span class="t" style="left:670.35px;top:356.35px;font-size:24.5px;color:#000;line-height:36px;">,</span><svg style="left:678.3px;top:365.75px" width="10" height="15" viewBox="0 0 10 15"><path d="M5 0V14" fill="none" stroke="#3a96e0" stroke-width="1.5"/><path d="M0.4 7.4L5 14.4L9.6 7.4" fill="none" stroke="#3a96e0" stroke-width="1.1"/></svg><span class="t" style="left:46.87px;top:392.35px;font-size:24.5px;color:#dc08d0;line-height:36px;transform:scaleX(0.7786);">&quot;</span><span class="t" style="left:56.34px;top:392.35px;font-size:24.5px;color:#dc08d0;line-height:36px;transform:scaleX(1.0088);">adaptive</span><span class="t" style="left:151.65px;top:392.35px;font-size:24.5px;color:#dc08d0;line-height:36px;transform:scaleX(0.8000);">&quot;</span><span class="t" style="left:159.85px;top:392.35px;font-size:24.5px;color:#000;line-height:36px;">: </span><span class="t" style="left:174.15px;top:392.35px;font-size:24.5px;color:#0000c8;line-height:36px;transform:scaleX(1.0050);">true</span><span class="t" style="left:216.65px;top:392.35px;font-size:24.5px;color:#000;line-height:36px;">,</span><svg style="left:224.2px;top:401.75px" width="10" height="15" viewBox="0 0 10 15"><path d="M5 0V14" fill="none" stroke="#3a96e0" stroke-width="1.5"/><path d="M0.4 7.4L5 14.4L9.6 7.4" fill="none" stroke="#3a96e0" stroke-width="1.1"/></svg><span class="t" style="left:46.87px;top:428.35px;font-size:24.5px;color:#dc08d0;line-height:36px;transform:scaleX(0.7786);">&quot;</span><span class="t" style="left:56.87px;top:428.35px;font-size:24.5px;color:#dc08d0;line-height:36px;transform:scaleX(0.9825);">multi_user</span><span class="t" style="left:170.14px;top:428.35px;font-size:24.5px;color:#dc08d0;line-height:36px;transform:scaleX(0.8143);">&quot;</span><span class="t" style="left:178.35px;top:428.35px;font-size:24.5px;color:#000;line-height:36px;">: </span><span class="t" style="left:192.65px;top:428.35px;font-size:24.5px;color:#0000c8;line-height:36px;transform:scaleX(1.0050);">true</span><span class="t" style="left:235.25px;top:428.35px;font-size:24.5px;color:#000;line-height:36px;">,</span><svg style="left:243.1px;top:437.75px" width="10" height="15" viewBox="0 0 10 15"><path d="M5 0V14" fill="none" stroke="#3a96e0" stroke-width="1.5"/><path d="M0.4 7.4L5 14.4L9.6 7.4" fill="none" stroke="#3a96e0" stroke-width="1.1"/></svg><span class="t" style="left:46.87px;top:464.35px;font-size:24.5px;color:#dc08d0;line-height:36px;transform:scaleX(0.7786);">&quot;</span><span class="t" style="left:56.89px;top:464.35px;font-size:24.5px;color:#dc08d0;line-height:36px;transform:scaleX(0.9636);">redirect_asset</span><span class="t" style="left:207.65px;top:464.35px;font-size:24.5px;color:#dc08d0;line-height:36px;transform:scaleX(0.8000);">&quot;</span><span class="t" style="left:215.85px;top:464.35px;font-size:24.5px;color:#000;line-height:36px;">: </span><span class="t" style="left:230.35px;top:464.35px;font-size:24.5px;color:#0000c8;line-height:36px;transform:scaleX(0.9330);">false</span><span class="t" style="left:278.35px;top:464.35px;font-size:24.5px;color:#000;line-height:36px;">,</span><svg style="left:285.7px;top:473.75px" width="10" height="15" viewBox="0 0 10 15"><path d="M5 0V14" fill="none" stroke="#3a96e0" stroke-width="1.5"/><path d="M0.4 7.4L5 14.4L9.6 7.4" fill="none" stroke="#3a96e0" stroke-width="1.1"/></svg><span class="t" style="left:46.87px;top:500.35px;font-size:24.5px;color:#dc08d0;line-height:36px;transform:scaleX(0.7786);">&quot;</span><span class="t" style="left:56.32px;top:500.35px;font-size:24.5px;color:#dc08d0;line-height:36px;transform:scaleX(1.0315);">debug</span><span class="t" style="left:128.45px;top:500.35px;font-size:24.5px;color:#dc08d0;line-height:36px;transform:scaleX(0.8000);">&quot;</span><span class="t" style="left:136.65px;top:500.35px;font-size:24.5px;color:#000;line-height:36px;">: </span><span class="t" style="left:150.95px;top:500.35px;font-size:24.5px;color:#0000c8;line-height:36px;transform:scaleX(1.0050);">true</span><span class="t" style="left:193.5px;top:500.35px;font-size:24.5px;color:#000;line-height:36px;">,</span><svg style="left:201px;top:509.75px" width="10" height="15" viewBox="0 0 10 15"><path d="M5 0V14" fill="none" stroke="#3a96e0" stroke-width="1.5"/><path d="M0.4 7.4L5 14.4L9.6 7.4" fill="none" stroke="#3a96e0" stroke-width="1.1"/></svg><span class="t" style="left:46.87px;top:536.35px;font-size:24.5px;color:#dc08d0;line-height:36px;transform:scaleX(0.7786);">&quot;</span><span class="t" style="left:56.82px;top:536.35px;font-size:24.5px;color:#dc08d0;line-height:36px;transform:scaleX(1.0253);">mod</span><span class="t" style="left:108.06px;top:536.35px;font-size:24.5px;color:#dc08d0;line-height:36px;transform:scaleX(0.7857);">&quot;</span><span class="t" style="left:116.25px;top:536.35px;font-size:24.5px;color:#000;line-height:36px;">: </span><span class="t" style="left:130.75px;top:536.35px;font-size:24.5px;color:#0000c8;line-height:36px;transform:scaleX(0.9291);">false</span><span class="t" style="left:178.65px;top:536.35px;font-size:24.5px;color:#000;line-height:36px;">,</span><svg style="left:186.5px;top:545.75px" width="10" height="15" viewBox="0 0 10 15"><path d="M5 0V14" fill="none" stroke="#3a96e0" stroke-width="1.5"/><path d="M0.4 7.4L5 14.4L9.6 7.4" fill="none" stroke="#3a96e0" stroke-width="1.1"/></svg><span class="t" style="left:46.87px;top:572.35px;font-size:24.5px;color:#dc08d0;line-height:36px;transform:scaleX(0.7786);">&quot;</span><span class="t" style="left:56.42px;top:572.35px;font-size:24.5px;color:#dc08d0;line-height:36px;transform:scaleX(0.9267);">assist_ext</span><span class="t" style="left:159.96px;top:572.35px;font-size:24.5px;color:#dc08d0;line-height:36px;transform:scaleX(0.7857);">&quot;</span><span class="t" style="left:168.15px;top:572.35px;font-size:24.5px;color:#000;line-height:36px;">: </span><span class="t" style="left:182.45px;top:572.35px;font-size:24.5px;color:#0000c8;line-height:36px;transform:scaleX(1.0050);">true</span><span class="t" style="left:225.05px;top:572.35px;font-size:24.5px;color:#000;line-height:36px;">,</span><svg style="left:232.9px;top:581.75px" width="10" height="15" viewBox="0 0 10 15"><path d="M5 0V14" fill="none" stroke="#3a96e0" stroke-width="1.5"/><path d="M0.4 7.4L5 14.4L9.6 7.4" fill="none" stroke="#3a96e0" stroke-width="1.1"/></svg><span class="t" style="left:46.87px;top:608.35px;font-size:24.5px;color:#dc08d0;line-height:36px;transform:scaleX(0.7786);">&quot;</span><span class="t" style="left:57.35px;top:608.35px;font-size:24.5px;color:#dc08d0;line-height:36px;transform:scaleX(1.0080);">faketime</span><span class="t" style="left:152.05px;top:608.35px;font-size:24.5px;color:#dc08d0;line-height:36px;transform:scaleX(0.8000);">&quot;</span><span class="t" style="left:160.35px;top:608.35px;font-size:24.5px;color:#000;line-height:36px;">: </span><span class="t" style="left:173.07px;top:608.35px;font-size:24.5px;color:#000;line-height:36px;transform:scaleX(0.9827);">1756656000</span><span class="t" style="left:307.7px;top:608.35px;font-size:24.5px;color:#000;line-height:36px;">,</span><svg style="left:315.3px;top:617.75px" width="10" height="15" viewBox="0 0 10 15"><path d="M5 0V14" fill="none" stroke="#3a96e0" stroke-width="1.5"/><path d="M0.4 7.4L5 14.4L9.6 7.4" fill="none" stroke="#3a96e0" stroke-width="1.1"/></svg><span class="t" style="left:46.87px;top:644.35px;font-size:24.5px;color:#dc08d0;line-height:36px;transform:scaleX(0.7786);">&quot;</span><span class="t" style="left:56.84px;top:644.35px;font-size:24.5px;color:#dc08d0;line-height:36px;transform:scaleX(1.0102);">multiplayer_addr</span><span class="t" style="left:242.58px;top:644.35px;font-size:24.5px;color:#dc08d0;line-height:36px;transform:scaleX(0.7714);">&quot;</span><span class="t" style="left:250.7px;top:644.35px;font-size:24.5px;color:#000;line-height:36px;">: </span><span class="t" style="left:264.88px;top:644.35px;font-size:24.5px;color:#dc08d0;line-height:36px;transform:scaleX(0.7714);">&quot;</span><span class="t" style="left:274.2px;top:644.35px;font-size:24.5px;color:#dc08d0;line-height:36px;transform:scaleX(0.9490);">127.0.0.1:8543</span><span class="t" style="left:432.15px;top:644.35px;font-size:24.5px;color:#dc08d0;line-height:36px;transform:scaleX(0.8000);">&quot;</span><svg style="left:441px;top:653.75px" width="10" height="15" viewBox="0 0 10 15"><path d="M5 0V14" fill="none" stroke="#3a96e0" stroke-width="1.5"/><path d="M0.4 7.4L5 14.4L9.6 7.4" fill="none" stroke="#3a96e0" stroke-width="1.1"/></svg><span class="t" style="left:19.75px;top:680.35px;font-size:22.6px;color:#000;font-weight:bold;line-height:36px;transform:scaleX(0.6889);">}</span><svg style="left:27.7px;top:690.25px" width="10" height="15" viewBox="0 0 10 15"><path d="M9.8 7.5H0.4" fill="none" stroke="#3a96e0" stroke-width="1.4"/><path d="M5.3 0.3L0.3 7.5L5.3 14.7" fill="none" stroke="#3a96e0" stroke-width="1.1"/></svg><div class="a" style="left:41px;top:605px;width:397px;height:42px;box-sizing:border-box;border:4px solid #e0222d;border-radius:3px"></div>
</body></html>
